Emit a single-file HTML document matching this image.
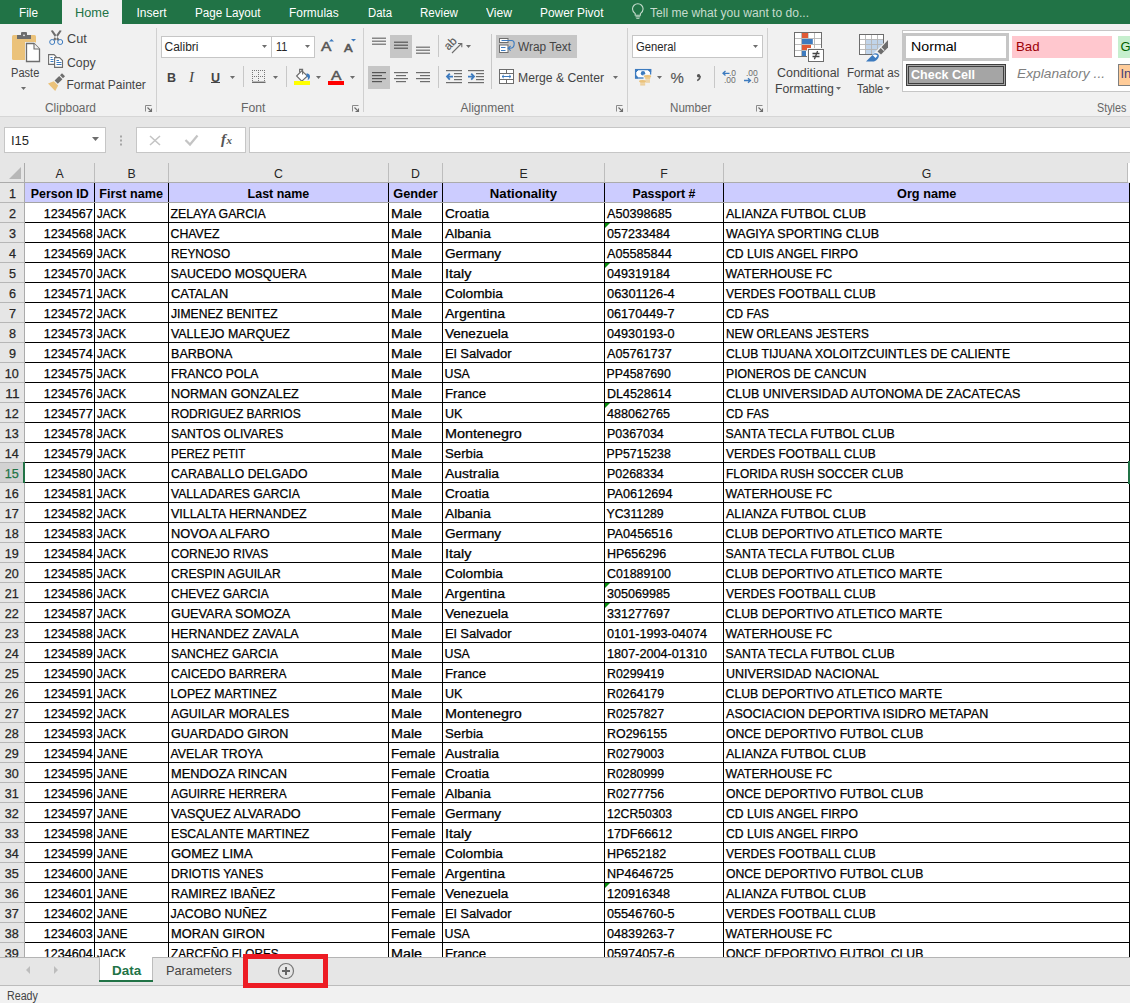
<!DOCTYPE html><html><head><meta charset="utf-8"><title>Excel</title><style>
html,body{margin:0;padding:0;}
body{width:1130px;height:1003px;position:relative;overflow:hidden;background:#fff;font-family:'Liberation Sans', sans-serif;}
.a{position:absolute;}
.t{white-space:pre;}
.g{-webkit-text-stroke:0.25px currentColor;}
.s5{-webkit-text-stroke:0.5px currentColor;}
svg.a{overflow:visible;}
</style></head><body>
<div class="a" style="left:0px;top:0px;width:1130px;height:24px;background:#217346;"></div>
<div class="a" style="left:62px;top:0px;width:60px;height:24px;background:#f1f1f1;"></div>
<div class="a t " style="top:3px;height:20px;line-height:20px;font-size:12px;color:#ffffff;left:18.50px;transform:scaleX(0.9813);transform-origin:0 0;">File</div>
<div class="a t " style="top:3px;height:20px;line-height:20px;font-size:12px;color:#217346;left:74.50px;transform:scaleX(1.0640);transform-origin:0 0;">Home</div>
<div class="a t " style="top:3px;height:20px;line-height:20px;font-size:12px;color:#ffffff;left:136.50px;">Insert</div>
<div class="a t " style="top:3px;height:20px;line-height:20px;font-size:12px;color:#ffffff;left:194.50px;transform:scaleX(0.9730);transform-origin:0 0;">Page Layout</div>
<div class="a t " style="top:3px;height:20px;line-height:20px;font-size:12px;color:#ffffff;left:288.50px;transform:scaleX(0.9915);transform-origin:0 0;">Formulas</div>
<div class="a t " style="top:3px;height:20px;line-height:20px;font-size:12px;color:#ffffff;left:367.50px;transform:scaleX(0.9442);transform-origin:0 0;">Data</div>
<div class="a t " style="top:3px;height:20px;line-height:20px;font-size:12px;color:#ffffff;left:419.50px;transform:scaleX(0.9646);transform-origin:0 0;">Review</div>
<div class="a t " style="top:3px;height:20px;line-height:20px;font-size:12px;color:#ffffff;left:485.50px;transform:scaleX(1.0082);transform-origin:0 0;">View</div>
<div class="a t " style="top:3px;height:20px;line-height:20px;font-size:12px;color:#ffffff;left:539.50px;transform:scaleX(0.9916);transform-origin:0 0;">Power Pivot</div>
<div class="a t " style="top:3px;height:20px;line-height:20px;font-size:12px;color:#c6dccd;left:649.50px;transform:scaleX(1.0058);transform-origin:0 0;">Tell me what you want to do...</div>
<div class="a" style="left:0px;top:24px;width:1130px;height:92px;background:#f1f1f1;"></div>
<div class="a" style="left:0px;top:116px;width:1130px;height:1px;background:#d6d6d6;"></div>
<div class="a" style="left:156px;top:28px;width:1px;height:84px;background:#d0d0d0;"></div>
<div class="a" style="left:363px;top:28px;width:1px;height:84px;background:#d0d0d0;"></div>
<div class="a" style="left:627px;top:28px;width:1px;height:84px;background:#d0d0d0;"></div>
<div class="a" style="left:767px;top:28px;width:1px;height:84px;background:#d0d0d0;"></div>
<div class="a t " style="top:98px;height:20px;line-height:20px;font-size:12px;color:#666666;left:44.50px;transform:scaleX(0.9926);transform-origin:0 0;">Clipboard</div>
<div class="a t " style="top:98px;height:20px;line-height:20px;font-size:12px;color:#666666;left:240.50px;transform:scaleX(1.0167);transform-origin:0 0;">Font</div>
<div class="a t " style="top:98px;height:20px;line-height:20px;font-size:12px;color:#666666;left:460.50px;">Alignment</div>
<div class="a t " style="top:98px;height:20px;line-height:20px;font-size:12px;color:#666666;left:669.50px;transform:scaleX(0.9691);transform-origin:0 0;">Number</div>
<div class="a t " style="top:98px;height:20px;line-height:20px;font-size:12px;color:#666666;left:1096.50px;transform:scaleX(0.8963);transform-origin:0 0;">Styles</div>
<div class="a t " style="top:63px;height:20px;line-height:20px;font-size:12px;color:#444444;left:10.50px;transform:scaleX(0.9229);transform-origin:0 0;">Paste</div>
<div class="a t " style="top:29px;height:20px;line-height:20px;font-size:12px;color:#444444;left:66.50px;transform:scaleX(1.0572);transform-origin:0 0;">Cut</div>
<div class="a t " style="top:53px;height:20px;line-height:20px;font-size:12px;color:#444444;left:66.50px;transform:scaleX(1.0216);transform-origin:0 0;">Copy</div>
<div class="a t " style="top:75px;height:20px;line-height:20px;font-size:12px;color:#444444;left:66.50px;">Format Painter</div>
<div class="a" style="left:161px;top:36px;width:111px;height:22px;background:#ffffff;border:1px solid #c6c6c6;box-sizing:border-box;"></div>
<div class="a" style="left:271px;top:36px;width:44px;height:22px;background:#ffffff;border:1px solid #c6c6c6;box-sizing:border-box;"></div>
<div class="a t " style="top:37px;height:20px;line-height:20px;font-size:12px;color:#262626;left:164.50px;">Calibri</div>
<div class="a t " style="top:37px;height:20px;line-height:20px;font-size:12px;color:#262626;left:275.50px;transform:scaleX(0.9068);transform-origin:0 0;">11</div>
<div class="a" style="left:390px;top:35px;width:22px;height:23px;background:#c6c6c6;"></div>
<div class="a" style="left:368px;top:66px;width:22px;height:23px;background:#c6c6c6;"></div>
<div class="a" style="left:496px;top:35px;width:81px;height:23px;background:#c6c6c6;"></div>
<div class="a t " style="top:37px;height:20px;line-height:20px;font-size:12px;color:#444444;left:517.50px;transform:scaleX(0.9890);transform-origin:0 0;">Wrap Text</div>
<div class="a t " style="top:68px;height:20px;line-height:20px;font-size:12px;color:#444444;left:517.50px;transform:scaleX(1.0155);transform-origin:0 0;">Merge &amp; Center</div>
<div class="a" style="left:632px;top:35px;width:131px;height:23px;background:#ffffff;border:1px solid #c6c6c6;box-sizing:border-box;"></div>
<div class="a t " style="top:37px;height:20px;line-height:20px;font-size:12px;color:#262626;left:635.50px;transform:scaleX(0.9352);transform-origin:0 0;">General</div>
<div class="a t " style="top:63px;height:20px;line-height:20px;font-size:12px;color:#444444;left:776.50px;transform:scaleX(1.0382);transform-origin:0 0;">Conditional</div>
<div class="a t " style="top:79px;height:20px;line-height:20px;font-size:12px;color:#444444;left:774.50px;transform:scaleX(1.0256);transform-origin:0 0;">Formatting</div>
<div class="a t " style="top:63px;height:20px;line-height:20px;font-size:12px;color:#444444;left:846.50px;transform:scaleX(0.9714);transform-origin:0 0;">Format as</div>
<div class="a t " style="top:79px;height:20px;line-height:20px;font-size:12px;color:#444444;left:856.50px;transform:scaleX(0.9138);transform-origin:0 0;">Table</div>
<div class="a" style="left:902px;top:30px;width:240px;height:62px;background:#ffffff;border:1px solid #c6c6c6;box-sizing:border-box;"></div>
<div class="a" style="left:903px;top:33px;width:106px;height:28px;background:#ffffff;border:3px solid #c6c6c6;box-sizing:border-box;"></div>
<div class="a t " style="top:37px;height:20px;line-height:20px;font-size:13px;color:#000000;left:910.50px;transform:scaleX(1.0927);transform-origin:0 0;">Normal</div>
<div class="a" style="left:1012px;top:36px;width:100px;height:22px;background:#ffc7ce;"></div>
<div class="a t " style="top:37px;height:20px;line-height:20px;font-size:13px;color:#9c0006;left:1015.50px;transform:scaleX(1.0162);transform-origin:0 0;">Bad</div>
<div class="a" style="left:1118px;top:36px;width:20px;height:22px;background:#c6efce;"></div>
<div class="a t " style="top:37px;height:20px;line-height:20px;font-size:13px;color:#006100;left:1120.50px;">Good</div>
<div class="a" style="left:906px;top:64px;width:100px;height:22px;background:#a5a5a5;border:3px double #3f3f3f;box-sizing:border-box;"></div>
<div class="a t " style="top:65px;height:20px;line-height:20px;font-size:13px;color:#ffffff;font-weight:bold;left:910.50px;transform:scaleX(0.9621);transform-origin:0 0;">Check Cell</div>
<div class="a t " style="top:64px;height:20px;line-height:20px;font-size:13px;color:#7f7f7f;font-style:italic;left:1016.50px;transform:scaleX(1.0596);transform-origin:0 0;">Explanatory ...</div>
<div class="a" style="left:1118px;top:64px;width:20px;height:22px;background:#ffcc99;border:1px solid #7f7f7f;box-sizing:border-box;"></div>
<div class="a t " style="top:64px;height:20px;line-height:20px;font-size:13px;color:#3f3f76;left:1120.50px;">Input</div>
<div class="a" style="left:0px;top:117px;width:1130px;height:46px;background:#e6e6e6;"></div>
<div class="a" style="left:4px;top:127px;width:102px;height:26px;background:#ffffff;border:1px solid #c6c6c6;box-sizing:border-box;"></div>
<div class="a t " style="top:131px;height:20px;line-height:20px;font-size:12px;color:#262626;left:10.50px;transform:scaleX(1.0837);transform-origin:0 0;">I15</div>
<div class="a" style="left:136px;top:127px;width:110px;height:26px;background:#ffffff;border:1px solid #c6c6c6;box-sizing:border-box;"></div>
<div class="a" style="left:249px;top:127px;width:900px;height:26px;background:#ffffff;border:1px solid #c6c6c6;box-sizing:border-box;"></div>
<div class="a" style="left:0px;top:163px;width:1130px;height:20px;background:#e6e6e6;"></div>
<div class="a" style="left:0px;top:183px;width:24px;height:774px;background:#e6e6e6;"></div>
<svg class="a" style="left:0px;top:163px;" width="24" height="20" viewBox="0 0 24 20"><polygon points="21,4 21,16 9,16" fill="#b7b7b7"/></svg>
<div class="a" style="left:24px;top:163px;width:1px;height:20px;background:#bdbdbd;"></div>
<div class="a" style="left:94px;top:163px;width:1px;height:20px;background:#bdbdbd;"></div>
<div class="a" style="left:168px;top:163px;width:1px;height:20px;background:#bdbdbd;"></div>
<div class="a" style="left:388px;top:163px;width:1px;height:20px;background:#bdbdbd;"></div>
<div class="a" style="left:442px;top:163px;width:1px;height:20px;background:#bdbdbd;"></div>
<div class="a" style="left:604px;top:163px;width:1px;height:20px;background:#bdbdbd;"></div>
<div class="a" style="left:723px;top:163px;width:1px;height:20px;background:#bdbdbd;"></div>
<div class="a" style="left:1127px;top:163px;width:1px;height:20px;background:#bdbdbd;"></div>
<div class="a" style="left:1128px;top:163px;width:2px;height:19px;background:#ffffff;"></div>
<div class="a" style="left:0px;top:182px;width:1128px;height:1px;background:#ababab;"></div>
<div class="a" style="left:24px;top:163px;width:1px;height:794px;background:#ababab;"></div>
<div class="a t " style="top:164px;height:20px;line-height:20px;font-size:12.3px;color:#262626;left:55.40px;">A</div>
<div class="a t " style="top:164px;height:20px;line-height:20px;font-size:12.3px;color:#262626;left:127.40px;">B</div>
<div class="a t " style="top:164px;height:20px;line-height:20px;font-size:12.3px;color:#262626;left:274.05px;">C</div>
<div class="a t " style="top:164px;height:20px;line-height:20px;font-size:12.3px;color:#262626;left:411.05px;">D</div>
<div class="a t " style="top:164px;height:20px;line-height:20px;font-size:12.3px;color:#262626;left:519.40px;">E</div>
<div class="a t " style="top:164px;height:20px;line-height:20px;font-size:12.3px;color:#262626;left:660.24px;">F</div>
<div class="a t " style="top:164px;height:20px;line-height:20px;font-size:12.3px;color:#262626;left:921.71px;">G</div>
<div class="a" style="left:25px;top:183px;width:1104px;height:19px;background:#ccccff;"></div>
<div class="a" style="left:0px;top:202px;width:24px;height:1px;background:#b6b6b6;"></div>
<div class="a" style="left:0px;top:222px;width:24px;height:1px;background:#b6b6b6;"></div>
<div class="a" style="left:0px;top:242px;width:24px;height:1px;background:#b6b6b6;"></div>
<div class="a" style="left:0px;top:262px;width:24px;height:1px;background:#b6b6b6;"></div>
<div class="a" style="left:0px;top:282px;width:24px;height:1px;background:#b6b6b6;"></div>
<div class="a" style="left:0px;top:302px;width:24px;height:1px;background:#b6b6b6;"></div>
<div class="a" style="left:0px;top:322px;width:24px;height:1px;background:#b6b6b6;"></div>
<div class="a" style="left:0px;top:342px;width:24px;height:1px;background:#b6b6b6;"></div>
<div class="a" style="left:0px;top:362px;width:24px;height:1px;background:#b6b6b6;"></div>
<div class="a" style="left:0px;top:382px;width:24px;height:1px;background:#b6b6b6;"></div>
<div class="a" style="left:0px;top:402px;width:24px;height:1px;background:#b6b6b6;"></div>
<div class="a" style="left:0px;top:422px;width:24px;height:1px;background:#b6b6b6;"></div>
<div class="a" style="left:0px;top:442px;width:24px;height:1px;background:#b6b6b6;"></div>
<div class="a" style="left:0px;top:462px;width:24px;height:1px;background:#b6b6b6;"></div>
<div class="a" style="left:0px;top:482px;width:24px;height:1px;background:#b6b6b6;"></div>
<div class="a" style="left:0px;top:502px;width:24px;height:1px;background:#b6b6b6;"></div>
<div class="a" style="left:0px;top:522px;width:24px;height:1px;background:#b6b6b6;"></div>
<div class="a" style="left:0px;top:542px;width:24px;height:1px;background:#b6b6b6;"></div>
<div class="a" style="left:0px;top:562px;width:24px;height:1px;background:#b6b6b6;"></div>
<div class="a" style="left:0px;top:582px;width:24px;height:1px;background:#b6b6b6;"></div>
<div class="a" style="left:0px;top:602px;width:24px;height:1px;background:#b6b6b6;"></div>
<div class="a" style="left:0px;top:622px;width:24px;height:1px;background:#b6b6b6;"></div>
<div class="a" style="left:0px;top:642px;width:24px;height:1px;background:#b6b6b6;"></div>
<div class="a" style="left:0px;top:662px;width:24px;height:1px;background:#b6b6b6;"></div>
<div class="a" style="left:0px;top:682px;width:24px;height:1px;background:#b6b6b6;"></div>
<div class="a" style="left:0px;top:702px;width:24px;height:1px;background:#b6b6b6;"></div>
<div class="a" style="left:0px;top:722px;width:24px;height:1px;background:#b6b6b6;"></div>
<div class="a" style="left:0px;top:742px;width:24px;height:1px;background:#b6b6b6;"></div>
<div class="a" style="left:0px;top:762px;width:24px;height:1px;background:#b6b6b6;"></div>
<div class="a" style="left:0px;top:782px;width:24px;height:1px;background:#b6b6b6;"></div>
<div class="a" style="left:0px;top:802px;width:24px;height:1px;background:#b6b6b6;"></div>
<div class="a" style="left:0px;top:822px;width:24px;height:1px;background:#b6b6b6;"></div>
<div class="a" style="left:0px;top:842px;width:24px;height:1px;background:#b6b6b6;"></div>
<div class="a" style="left:0px;top:862px;width:24px;height:1px;background:#b6b6b6;"></div>
<div class="a" style="left:0px;top:882px;width:24px;height:1px;background:#b6b6b6;"></div>
<div class="a" style="left:0px;top:902px;width:24px;height:1px;background:#b6b6b6;"></div>
<div class="a" style="left:0px;top:922px;width:24px;height:1px;background:#b6b6b6;"></div>
<div class="a" style="left:0px;top:942px;width:24px;height:1px;background:#b6b6b6;"></div>
<div class="a" style="left:0px;top:463px;width:23px;height:19px;background:#d2d2d2;"></div>
<div class="a" style="left:23px;top:462px;width:2px;height:21px;background:#217346;"></div>
<div class="a t g" style="top:184px;height:20px;line-height:20px;font-size:12.3px;color:#262626;left:8.58px;transform:scaleX(1.0267);transform-origin:50% 0;">1</div>
<div class="a t g" style="top:204px;height:20px;line-height:20px;font-size:12.3px;color:#262626;left:8.58px;transform:scaleX(1.0267);transform-origin:50% 0;">2</div>
<div class="a t g" style="top:224px;height:20px;line-height:20px;font-size:12.3px;color:#262626;left:8.58px;transform:scaleX(1.0267);transform-origin:50% 0;">3</div>
<div class="a t g" style="top:244px;height:20px;line-height:20px;font-size:12.3px;color:#262626;left:8.58px;transform:scaleX(1.0267);transform-origin:50% 0;">4</div>
<div class="a t g" style="top:264px;height:20px;line-height:20px;font-size:12.3px;color:#262626;left:8.58px;transform:scaleX(1.0267);transform-origin:50% 0;">5</div>
<div class="a t g" style="top:284px;height:20px;line-height:20px;font-size:12.3px;color:#262626;left:8.58px;transform:scaleX(1.0267);transform-origin:50% 0;">6</div>
<div class="a t g" style="top:304px;height:20px;line-height:20px;font-size:12.3px;color:#262626;left:8.58px;transform:scaleX(1.0267);transform-origin:50% 0;">7</div>
<div class="a t g" style="top:324px;height:20px;line-height:20px;font-size:12.3px;color:#262626;left:8.58px;transform:scaleX(1.0267);transform-origin:50% 0;">8</div>
<div class="a t g" style="top:344px;height:20px;line-height:20px;font-size:12.3px;color:#262626;left:8.58px;transform:scaleX(1.0267);transform-origin:50% 0;">9</div>
<div class="a t g" style="top:364px;height:20px;line-height:20px;font-size:12.3px;color:#262626;left:5.16px;transform:scaleX(1.0246);transform-origin:50% 0;">10</div>
<div class="a t g" style="top:384px;height:20px;line-height:20px;font-size:12.3px;color:#262626;left:5.62px;transform:scaleX(1.1049);transform-origin:50% 0;">11</div>
<div class="a t g" style="top:404px;height:20px;line-height:20px;font-size:12.3px;color:#262626;left:5.16px;transform:scaleX(1.0246);transform-origin:50% 0;">12</div>
<div class="a t g" style="top:424px;height:20px;line-height:20px;font-size:12.3px;color:#262626;left:5.16px;transform:scaleX(1.0246);transform-origin:50% 0;">13</div>
<div class="a t g" style="top:444px;height:20px;line-height:20px;font-size:12.3px;color:#262626;left:5.16px;transform:scaleX(1.0246);transform-origin:50% 0;">14</div>
<div class="a t g" style="top:464px;height:20px;line-height:20px;font-size:12.3px;color:#217346;left:5.16px;transform:scaleX(1.0246);transform-origin:50% 0;">15</div>
<div class="a t g" style="top:484px;height:20px;line-height:20px;font-size:12.3px;color:#262626;left:5.16px;transform:scaleX(1.0246);transform-origin:50% 0;">16</div>
<div class="a t g" style="top:504px;height:20px;line-height:20px;font-size:12.3px;color:#262626;left:5.16px;transform:scaleX(1.0246);transform-origin:50% 0;">17</div>
<div class="a t g" style="top:524px;height:20px;line-height:20px;font-size:12.3px;color:#262626;left:5.16px;transform:scaleX(1.0246);transform-origin:50% 0;">18</div>
<div class="a t g" style="top:544px;height:20px;line-height:20px;font-size:12.3px;color:#262626;left:5.16px;transform:scaleX(1.0246);transform-origin:50% 0;">19</div>
<div class="a t g" style="top:564px;height:20px;line-height:20px;font-size:12.3px;color:#262626;left:5.16px;transform:scaleX(1.0246);transform-origin:50% 0;">20</div>
<div class="a t g" style="top:584px;height:20px;line-height:20px;font-size:12.3px;color:#262626;left:5.16px;transform:scaleX(1.0246);transform-origin:50% 0;">21</div>
<div class="a t g" style="top:604px;height:20px;line-height:20px;font-size:12.3px;color:#262626;left:5.16px;transform:scaleX(1.0246);transform-origin:50% 0;">22</div>
<div class="a t g" style="top:624px;height:20px;line-height:20px;font-size:12.3px;color:#262626;left:5.16px;transform:scaleX(1.0246);transform-origin:50% 0;">23</div>
<div class="a t g" style="top:644px;height:20px;line-height:20px;font-size:12.3px;color:#262626;left:5.16px;transform:scaleX(1.0246);transform-origin:50% 0;">24</div>
<div class="a t g" style="top:664px;height:20px;line-height:20px;font-size:12.3px;color:#262626;left:5.16px;transform:scaleX(1.0246);transform-origin:50% 0;">25</div>
<div class="a t g" style="top:684px;height:20px;line-height:20px;font-size:12.3px;color:#262626;left:5.16px;transform:scaleX(1.0246);transform-origin:50% 0;">26</div>
<div class="a t g" style="top:704px;height:20px;line-height:20px;font-size:12.3px;color:#262626;left:5.16px;transform:scaleX(1.0246);transform-origin:50% 0;">27</div>
<div class="a t g" style="top:724px;height:20px;line-height:20px;font-size:12.3px;color:#262626;left:5.16px;transform:scaleX(1.0246);transform-origin:50% 0;">28</div>
<div class="a t g" style="top:744px;height:20px;line-height:20px;font-size:12.3px;color:#262626;left:5.16px;transform:scaleX(1.0246);transform-origin:50% 0;">29</div>
<div class="a t g" style="top:764px;height:20px;line-height:20px;font-size:12.3px;color:#262626;left:5.16px;transform:scaleX(1.0246);transform-origin:50% 0;">30</div>
<div class="a t g" style="top:784px;height:20px;line-height:20px;font-size:12.3px;color:#262626;left:5.16px;transform:scaleX(1.0246);transform-origin:50% 0;">31</div>
<div class="a t g" style="top:804px;height:20px;line-height:20px;font-size:12.3px;color:#262626;left:5.16px;transform:scaleX(1.0246);transform-origin:50% 0;">32</div>
<div class="a t g" style="top:824px;height:20px;line-height:20px;font-size:12.3px;color:#262626;left:5.16px;transform:scaleX(1.0246);transform-origin:50% 0;">33</div>
<div class="a t g" style="top:844px;height:20px;line-height:20px;font-size:12.3px;color:#262626;left:5.16px;transform:scaleX(1.0246);transform-origin:50% 0;">34</div>
<div class="a t g" style="top:864px;height:20px;line-height:20px;font-size:12.3px;color:#262626;left:5.16px;transform:scaleX(1.0246);transform-origin:50% 0;">35</div>
<div class="a t g" style="top:884px;height:20px;line-height:20px;font-size:12.3px;color:#262626;left:5.16px;transform:scaleX(1.0246);transform-origin:50% 0;">36</div>
<div class="a t g" style="top:904px;height:20px;line-height:20px;font-size:12.3px;color:#262626;left:5.16px;transform:scaleX(1.0246);transform-origin:50% 0;">37</div>
<div class="a t g" style="top:924px;height:20px;line-height:20px;font-size:12.3px;color:#262626;left:5.16px;transform:scaleX(1.0246);transform-origin:50% 0;">38</div>
<div class="a t g" style="top:944px;height:20px;line-height:20px;font-size:12.3px;color:#262626;left:5.16px;transform:scaleX(1.0246);transform-origin:50% 0;">39</div>
<div class="a" style="left:94px;top:183px;width:1px;height:774px;background:#000000;"></div>
<div class="a" style="left:168px;top:183px;width:1px;height:774px;background:#000000;"></div>
<div class="a" style="left:388px;top:183px;width:1px;height:774px;background:#000000;"></div>
<div class="a" style="left:442px;top:183px;width:1px;height:774px;background:#000000;"></div>
<div class="a" style="left:604px;top:183px;width:1px;height:774px;background:#000000;"></div>
<div class="a" style="left:723px;top:183px;width:1px;height:774px;background:#000000;"></div>
<div class="a" style="left:1129px;top:183px;width:1px;height:774px;background:#000000;"></div>
<div class="a" style="left:25px;top:222px;width:1104px;height:1px;background:#000000;"></div>
<div class="a" style="left:25px;top:242px;width:1104px;height:1px;background:#000000;"></div>
<div class="a" style="left:25px;top:262px;width:1104px;height:1px;background:#000000;"></div>
<div class="a" style="left:25px;top:282px;width:1104px;height:1px;background:#000000;"></div>
<div class="a" style="left:25px;top:302px;width:1104px;height:1px;background:#000000;"></div>
<div class="a" style="left:25px;top:322px;width:1104px;height:1px;background:#000000;"></div>
<div class="a" style="left:25px;top:342px;width:1104px;height:1px;background:#000000;"></div>
<div class="a" style="left:25px;top:362px;width:1104px;height:1px;background:#000000;"></div>
<div class="a" style="left:25px;top:382px;width:1104px;height:1px;background:#000000;"></div>
<div class="a" style="left:25px;top:402px;width:1104px;height:1px;background:#000000;"></div>
<div class="a" style="left:25px;top:422px;width:1104px;height:1px;background:#000000;"></div>
<div class="a" style="left:25px;top:442px;width:1104px;height:1px;background:#000000;"></div>
<div class="a" style="left:25px;top:462px;width:1104px;height:1px;background:#000000;"></div>
<div class="a" style="left:25px;top:482px;width:1104px;height:1px;background:#000000;"></div>
<div class="a" style="left:25px;top:502px;width:1104px;height:1px;background:#000000;"></div>
<div class="a" style="left:25px;top:522px;width:1104px;height:1px;background:#000000;"></div>
<div class="a" style="left:25px;top:542px;width:1104px;height:1px;background:#000000;"></div>
<div class="a" style="left:25px;top:562px;width:1104px;height:1px;background:#000000;"></div>
<div class="a" style="left:25px;top:582px;width:1104px;height:1px;background:#000000;"></div>
<div class="a" style="left:25px;top:602px;width:1104px;height:1px;background:#000000;"></div>
<div class="a" style="left:25px;top:622px;width:1104px;height:1px;background:#000000;"></div>
<div class="a" style="left:25px;top:642px;width:1104px;height:1px;background:#000000;"></div>
<div class="a" style="left:25px;top:662px;width:1104px;height:1px;background:#000000;"></div>
<div class="a" style="left:25px;top:682px;width:1104px;height:1px;background:#000000;"></div>
<div class="a" style="left:25px;top:702px;width:1104px;height:1px;background:#000000;"></div>
<div class="a" style="left:25px;top:722px;width:1104px;height:1px;background:#000000;"></div>
<div class="a" style="left:25px;top:742px;width:1104px;height:1px;background:#000000;"></div>
<div class="a" style="left:25px;top:762px;width:1104px;height:1px;background:#000000;"></div>
<div class="a" style="left:25px;top:782px;width:1104px;height:1px;background:#000000;"></div>
<div class="a" style="left:25px;top:802px;width:1104px;height:1px;background:#000000;"></div>
<div class="a" style="left:25px;top:822px;width:1104px;height:1px;background:#000000;"></div>
<div class="a" style="left:25px;top:842px;width:1104px;height:1px;background:#000000;"></div>
<div class="a" style="left:25px;top:862px;width:1104px;height:1px;background:#000000;"></div>
<div class="a" style="left:25px;top:882px;width:1104px;height:1px;background:#000000;"></div>
<div class="a" style="left:25px;top:902px;width:1104px;height:1px;background:#000000;"></div>
<div class="a" style="left:25px;top:922px;width:1104px;height:1px;background:#000000;"></div>
<div class="a" style="left:25px;top:942px;width:1104px;height:1px;background:#000000;"></div>
<div class="a" style="left:1128px;top:461px;width:2px;height:23px;background:#217346;"></div>
<div class="a" style="left:25px;top:202px;width:1104px;height:1px;background:#a3a3a3;"></div>
<div class="a t " style="top:184px;height:20px;line-height:20px;font-size:12.3px;color:#000000;font-weight:bold;left:30.80px;transform:scaleX(1.0064);transform-origin:50% 0;">Person ID</div>
<div class="a t " style="top:184px;height:20px;line-height:20px;font-size:12.3px;color:#000000;font-weight:bold;left:100.41px;transform:scaleX(1.0254);transform-origin:50% 0;">First name</div>
<div class="a t " style="top:184px;height:20px;line-height:20px;font-size:12.3px;color:#000000;font-weight:bold;left:248.09px;transform:scaleX(1.0129);transform-origin:50% 0;">Last name</div>
<div class="a t " style="top:184px;height:20px;line-height:20px;font-size:12.3px;color:#000000;font-weight:bold;left:393.97px;transform:scaleX(1.0358);transform-origin:50% 0;">Gender</div>
<div class="a t " style="top:184px;height:20px;line-height:20px;font-size:12.3px;color:#000000;font-weight:bold;left:492.06px;transform:scaleX(1.0680);transform-origin:50% 0;">Nationality</div>
<div class="a t " style="top:184px;height:20px;line-height:20px;font-size:12.3px;color:#000000;font-weight:bold;left:632.55px;">Passport #</div>
<div class="a t " style="top:184px;height:20px;line-height:20px;font-size:12.3px;color:#000000;font-weight:bold;left:897.80px;transform:scaleX(1.0340);transform-origin:50% 0;">Org name</div>
<div class="a t g" style="top:204px;height:20px;line-height:20px;font-size:12.3px;color:#000000;left:44.62px;transform:scaleX(1.0240);transform-origin:100% 0;">1234567</div>
<div class="a t g" style="top:204px;height:20px;line-height:20px;font-size:12.3px;color:#000000;left:96.50px;transform:scaleX(0.9286);transform-origin:0 0;">JACK</div>
<div class="a t g" style="top:204px;height:20px;line-height:20px;font-size:12.3px;color:#000000;left:170.50px;">ZELAYA GARCIA</div>
<div class="a t g" style="top:204px;height:20px;line-height:20px;font-size:12.3px;color:#000000;left:390.50px;transform:scaleX(1.1660);transform-origin:0 0;">Male</div>
<div class="a t g" style="top:204px;height:20px;line-height:20px;font-size:12.3px;color:#000000;left:444.50px;transform:scaleX(1.1115);transform-origin:0 0;">Croatia</div>
<div class="a t g" style="top:204px;height:20px;line-height:20px;font-size:12.3px;color:#000000;left:606.50px;transform:scaleX(1.0285);transform-origin:0 0;">A50398685</div>
<div class="a t g" style="top:204px;height:20px;line-height:20px;font-size:12.3px;color:#000000;left:725.50px;transform:scaleX(1.0121);transform-origin:0 0;">ALIANZA FUTBOL CLUB</div>
<div class="a t g" style="top:224px;height:20px;line-height:20px;font-size:12.3px;color:#000000;left:44.62px;transform:scaleX(1.0240);transform-origin:100% 0;">1234568</div>
<div class="a t g" style="top:224px;height:20px;line-height:20px;font-size:12.3px;color:#000000;left:96.50px;transform:scaleX(0.9286);transform-origin:0 0;">JACK</div>
<div class="a t g" style="top:224px;height:20px;line-height:20px;font-size:12.3px;color:#000000;left:170.50px;">CHAVEZ</div>
<div class="a t g" style="top:224px;height:20px;line-height:20px;font-size:12.3px;color:#000000;left:390.50px;transform:scaleX(1.1660);transform-origin:0 0;">Male</div>
<div class="a t g" style="top:224px;height:20px;line-height:20px;font-size:12.3px;color:#000000;left:444.50px;transform:scaleX(1.1160);transform-origin:0 0;">Albania</div>
<div class="a t g" style="top:224px;height:20px;line-height:20px;font-size:12.3px;color:#000000;left:606.50px;transform:scaleX(1.0237);transform-origin:0 0;">057233484</div>
<div class="a t g" style="top:224px;height:20px;line-height:20px;font-size:12.3px;color:#000000;left:725.50px;transform:scaleX(1.0154);transform-origin:0 0;">WAGIYA SPORTING CLUB</div>
<svg class="a" style="left:605px;top:223px;" width="6" height="6" viewBox="0 0 6 6"><polygon points="0,0 5,0 0,5" fill="#068a0c"/></svg>
<div class="a t g" style="top:244px;height:20px;line-height:20px;font-size:12.3px;color:#000000;left:44.62px;transform:scaleX(1.0240);transform-origin:100% 0;">1234569</div>
<div class="a t g" style="top:244px;height:20px;line-height:20px;font-size:12.3px;color:#000000;left:96.50px;transform:scaleX(0.9286);transform-origin:0 0;">JACK</div>
<div class="a t g" style="top:244px;height:20px;line-height:20px;font-size:12.3px;color:#000000;left:170.50px;transform:scaleX(0.9621);transform-origin:0 0;">REYNOSO</div>
<div class="a t g" style="top:244px;height:20px;line-height:20px;font-size:12.3px;color:#000000;left:390.50px;transform:scaleX(1.1660);transform-origin:0 0;">Male</div>
<div class="a t g" style="top:244px;height:20px;line-height:20px;font-size:12.3px;color:#000000;left:444.50px;transform:scaleX(1.1096);transform-origin:0 0;">Germany</div>
<div class="a t g" style="top:244px;height:20px;line-height:20px;font-size:12.3px;color:#000000;left:606.50px;transform:scaleX(1.0285);transform-origin:0 0;">A05585844</div>
<div class="a t g" style="top:244px;height:20px;line-height:20px;font-size:12.3px;color:#000000;left:725.50px;transform:scaleX(0.9883);transform-origin:0 0;">CD LUIS ANGEL FIRPO</div>
<div class="a t g" style="top:264px;height:20px;line-height:20px;font-size:12.3px;color:#000000;left:44.62px;transform:scaleX(1.0240);transform-origin:100% 0;">1234570</div>
<div class="a t g" style="top:264px;height:20px;line-height:20px;font-size:12.3px;color:#000000;left:96.50px;transform:scaleX(0.9286);transform-origin:0 0;">JACK</div>
<div class="a t g" style="top:264px;height:20px;line-height:20px;font-size:12.3px;color:#000000;left:170.50px;">SAUCEDO MOSQUERA</div>
<div class="a t g" style="top:264px;height:20px;line-height:20px;font-size:12.3px;color:#000000;left:390.50px;transform:scaleX(1.1660);transform-origin:0 0;">Male</div>
<div class="a t g" style="top:264px;height:20px;line-height:20px;font-size:12.3px;color:#000000;left:444.50px;transform:scaleX(1.1696);transform-origin:0 0;">Italy</div>
<div class="a t g" style="top:264px;height:20px;line-height:20px;font-size:12.3px;color:#000000;left:606.50px;transform:scaleX(1.0237);transform-origin:0 0;">049319184</div>
<div class="a t g" style="top:264px;height:20px;line-height:20px;font-size:12.3px;color:#000000;left:725.50px;">WATERHOUSE FC</div>
<svg class="a" style="left:605px;top:263px;" width="6" height="6" viewBox="0 0 6 6"><polygon points="0,0 5,0 0,5" fill="#068a0c"/></svg>
<div class="a t g" style="top:284px;height:20px;line-height:20px;font-size:12.3px;color:#000000;left:44.62px;transform:scaleX(1.0240);transform-origin:100% 0;">1234571</div>
<div class="a t g" style="top:284px;height:20px;line-height:20px;font-size:12.3px;color:#000000;left:96.50px;transform:scaleX(0.9286);transform-origin:0 0;">JACK</div>
<div class="a t g" style="top:284px;height:20px;line-height:20px;font-size:12.3px;color:#000000;left:170.50px;transform:scaleX(1.0452);transform-origin:0 0;">CATALAN</div>
<div class="a t g" style="top:284px;height:20px;line-height:20px;font-size:12.3px;color:#000000;left:390.50px;transform:scaleX(1.1660);transform-origin:0 0;">Male</div>
<div class="a t g" style="top:284px;height:20px;line-height:20px;font-size:12.3px;color:#000000;left:444.50px;transform:scaleX(1.1132);transform-origin:0 0;">Colombia</div>
<div class="a t g" style="top:284px;height:20px;line-height:20px;font-size:12.3px;color:#000000;left:606.50px;transform:scaleX(1.0434);transform-origin:0 0;">06301126-4</div>
<div class="a t g" style="top:284px;height:20px;line-height:20px;font-size:12.3px;color:#000000;left:725.50px;transform:scaleX(0.9724);transform-origin:0 0;">VERDES FOOTBALL CLUB</div>
<div class="a t g" style="top:304px;height:20px;line-height:20px;font-size:12.3px;color:#000000;left:44.62px;transform:scaleX(1.0240);transform-origin:100% 0;">1234572</div>
<div class="a t g" style="top:304px;height:20px;line-height:20px;font-size:12.3px;color:#000000;left:96.50px;transform:scaleX(0.9286);transform-origin:0 0;">JACK</div>
<div class="a t g" style="top:304px;height:20px;line-height:20px;font-size:12.3px;color:#000000;left:170.50px;transform:scaleX(0.9885);transform-origin:0 0;">JIMENEZ BENITEZ</div>
<div class="a t g" style="top:304px;height:20px;line-height:20px;font-size:12.3px;color:#000000;left:390.50px;transform:scaleX(1.1660);transform-origin:0 0;">Male</div>
<div class="a t g" style="top:304px;height:20px;line-height:20px;font-size:12.3px;color:#000000;left:444.50px;transform:scaleX(1.1396);transform-origin:0 0;">Argentina</div>
<div class="a t g" style="top:304px;height:20px;line-height:20px;font-size:12.3px;color:#000000;left:606.50px;transform:scaleX(1.0285);transform-origin:0 0;">06170449-7</div>
<div class="a t g" style="top:304px;height:20px;line-height:20px;font-size:12.3px;color:#000000;left:725.50px;transform:scaleX(0.9688);transform-origin:0 0;">CD FAS</div>
<div class="a t g" style="top:324px;height:20px;line-height:20px;font-size:12.3px;color:#000000;left:44.62px;transform:scaleX(1.0240);transform-origin:100% 0;">1234573</div>
<div class="a t g" style="top:324px;height:20px;line-height:20px;font-size:12.3px;color:#000000;left:96.50px;transform:scaleX(0.9286);transform-origin:0 0;">JACK</div>
<div class="a t g" style="top:324px;height:20px;line-height:20px;font-size:12.3px;color:#000000;left:170.50px;transform:scaleX(1.0080);transform-origin:0 0;">VALLEJO MARQUEZ</div>
<div class="a t g" style="top:324px;height:20px;line-height:20px;font-size:12.3px;color:#000000;left:390.50px;transform:scaleX(1.1660);transform-origin:0 0;">Male</div>
<div class="a t g" style="top:324px;height:20px;line-height:20px;font-size:12.3px;color:#000000;left:444.50px;transform:scaleX(1.1023);transform-origin:0 0;">Venezuela</div>
<div class="a t g" style="top:324px;height:20px;line-height:20px;font-size:12.3px;color:#000000;left:606.50px;transform:scaleX(1.0285);transform-origin:0 0;">04930193-0</div>
<div class="a t g" style="top:324px;height:20px;line-height:20px;font-size:12.3px;color:#000000;left:725.50px;transform:scaleX(0.9536);transform-origin:0 0;">NEW ORLEANS JESTERS</div>
<div class="a t g" style="top:344px;height:20px;line-height:20px;font-size:12.3px;color:#000000;left:44.62px;transform:scaleX(1.0240);transform-origin:100% 0;">1234574</div>
<div class="a t g" style="top:344px;height:20px;line-height:20px;font-size:12.3px;color:#000000;left:96.50px;transform:scaleX(0.9286);transform-origin:0 0;">JACK</div>
<div class="a t g" style="top:344px;height:20px;line-height:20px;font-size:12.3px;color:#000000;left:170.50px;transform:scaleX(1.0222);transform-origin:0 0;">BARBONA</div>
<div class="a t g" style="top:344px;height:20px;line-height:20px;font-size:12.3px;color:#000000;left:390.50px;transform:scaleX(1.1660);transform-origin:0 0;">Male</div>
<div class="a t g" style="top:344px;height:20px;line-height:20px;font-size:12.3px;color:#000000;left:444.50px;transform:scaleX(1.0604);transform-origin:0 0;">El Salvador</div>
<div class="a t g" style="top:344px;height:20px;line-height:20px;font-size:12.3px;color:#000000;left:606.50px;transform:scaleX(1.0285);transform-origin:0 0;">A05761737</div>
<div class="a t g" style="top:344px;height:20px;line-height:20px;font-size:12.3px;color:#000000;left:725.50px;transform:scaleX(0.9883);transform-origin:0 0;">CLUB TIJUANA XOLOITZCUINTLES DE CALIENTE</div>
<div class="a t g" style="top:364px;height:20px;line-height:20px;font-size:12.3px;color:#000000;left:44.62px;transform:scaleX(1.0240);transform-origin:100% 0;">1234575</div>
<div class="a t g" style="top:364px;height:20px;line-height:20px;font-size:12.3px;color:#000000;left:96.50px;transform:scaleX(0.9286);transform-origin:0 0;">JACK</div>
<div class="a t g" style="top:364px;height:20px;line-height:20px;font-size:12.3px;color:#000000;left:170.50px;transform:scaleX(0.9912);transform-origin:0 0;">FRANCO POLA</div>
<div class="a t g" style="top:364px;height:20px;line-height:20px;font-size:12.3px;color:#000000;left:390.50px;transform:scaleX(1.1660);transform-origin:0 0;">Male</div>
<div class="a t g" style="top:364px;height:20px;line-height:20px;font-size:12.3px;color:#000000;left:444.50px;">USA</div>
<div class="a t g" style="top:364px;height:20px;line-height:20px;font-size:12.3px;color:#000000;left:606.50px;">PP4587690</div>
<div class="a t g" style="top:364px;height:20px;line-height:20px;font-size:12.3px;color:#000000;left:725.50px;transform:scaleX(0.9929);transform-origin:0 0;">PIONEROS DE CANCUN</div>
<div class="a t g" style="top:384px;height:20px;line-height:20px;font-size:12.3px;color:#000000;left:44.62px;transform:scaleX(1.0240);transform-origin:100% 0;">1234576</div>
<div class="a t g" style="top:384px;height:20px;line-height:20px;font-size:12.3px;color:#000000;left:96.50px;transform:scaleX(0.9286);transform-origin:0 0;">JACK</div>
<div class="a t g" style="top:384px;height:20px;line-height:20px;font-size:12.3px;color:#000000;left:170.50px;transform:scaleX(1.0278);transform-origin:0 0;">NORMAN GONZALEZ</div>
<div class="a t g" style="top:384px;height:20px;line-height:20px;font-size:12.3px;color:#000000;left:390.50px;transform:scaleX(1.1660);transform-origin:0 0;">Male</div>
<div class="a t g" style="top:384px;height:20px;line-height:20px;font-size:12.3px;color:#000000;left:444.50px;transform:scaleX(1.0728);transform-origin:0 0;">France</div>
<div class="a t g" style="top:384px;height:20px;line-height:20px;font-size:12.3px;color:#000000;left:606.50px;transform:scaleX(1.0149);transform-origin:0 0;">DL4528614</div>
<div class="a t g" style="top:384px;height:20px;line-height:20px;font-size:12.3px;color:#000000;left:725.50px;transform:scaleX(1.0151);transform-origin:0 0;">CLUB UNIVERSIDAD AUTONOMA DE ZACATECAS</div>
<div class="a t g" style="top:404px;height:20px;line-height:20px;font-size:12.3px;color:#000000;left:44.62px;transform:scaleX(1.0240);transform-origin:100% 0;">1234577</div>
<div class="a t g" style="top:404px;height:20px;line-height:20px;font-size:12.3px;color:#000000;left:96.50px;transform:scaleX(0.9286);transform-origin:0 0;">JACK</div>
<div class="a t g" style="top:404px;height:20px;line-height:20px;font-size:12.3px;color:#000000;left:170.50px;transform:scaleX(0.9790);transform-origin:0 0;">RODRIGUEZ BARRIOS</div>
<div class="a t g" style="top:404px;height:20px;line-height:20px;font-size:12.3px;color:#000000;left:390.50px;transform:scaleX(1.1660);transform-origin:0 0;">Male</div>
<div class="a t g" style="top:404px;height:20px;line-height:20px;font-size:12.3px;color:#000000;left:444.50px;transform:scaleX(1.0209);transform-origin:0 0;">UK</div>
<div class="a t g" style="top:404px;height:20px;line-height:20px;font-size:12.3px;color:#000000;left:606.50px;transform:scaleX(1.0237);transform-origin:0 0;">488062765</div>
<div class="a t g" style="top:404px;height:20px;line-height:20px;font-size:12.3px;color:#000000;left:725.50px;transform:scaleX(0.9688);transform-origin:0 0;">CD FAS</div>
<svg class="a" style="left:605px;top:403px;" width="6" height="6" viewBox="0 0 6 6"><polygon points="0,0 5,0 0,5" fill="#068a0c"/></svg>
<div class="a t g" style="top:424px;height:20px;line-height:20px;font-size:12.3px;color:#000000;left:44.62px;transform:scaleX(1.0240);transform-origin:100% 0;">1234578</div>
<div class="a t g" style="top:424px;height:20px;line-height:20px;font-size:12.3px;color:#000000;left:96.50px;transform:scaleX(0.9286);transform-origin:0 0;">JACK</div>
<div class="a t g" style="top:424px;height:20px;line-height:20px;font-size:12.3px;color:#000000;left:170.50px;transform:scaleX(0.9820);transform-origin:0 0;">SANTOS OLIVARES</div>
<div class="a t g" style="top:424px;height:20px;line-height:20px;font-size:12.3px;color:#000000;left:390.50px;transform:scaleX(1.1660);transform-origin:0 0;">Male</div>
<div class="a t g" style="top:424px;height:20px;line-height:20px;font-size:12.3px;color:#000000;left:444.50px;transform:scaleX(1.1703);transform-origin:0 0;">Montenegro</div>
<div class="a t g" style="top:424px;height:20px;line-height:20px;font-size:12.3px;color:#000000;left:606.50px;transform:scaleX(1.0123);transform-origin:0 0;">P0367034</div>
<div class="a t g" style="top:424px;height:20px;line-height:20px;font-size:12.3px;color:#000000;left:725.50px;">SANTA TECLA FUTBOL CLUB</div>
<div class="a t g" style="top:444px;height:20px;line-height:20px;font-size:12.3px;color:#000000;left:44.62px;transform:scaleX(1.0240);transform-origin:100% 0;">1234579</div>
<div class="a t g" style="top:444px;height:20px;line-height:20px;font-size:12.3px;color:#000000;left:96.50px;transform:scaleX(0.9286);transform-origin:0 0;">JACK</div>
<div class="a t g" style="top:444px;height:20px;line-height:20px;font-size:12.3px;color:#000000;left:170.50px;transform:scaleX(0.9380);transform-origin:0 0;">PEREZ PETIT</div>
<div class="a t g" style="top:444px;height:20px;line-height:20px;font-size:12.3px;color:#000000;left:390.50px;transform:scaleX(1.1660);transform-origin:0 0;">Male</div>
<div class="a t g" style="top:444px;height:20px;line-height:20px;font-size:12.3px;color:#000000;left:444.50px;transform:scaleX(1.0735);transform-origin:0 0;">Serbia</div>
<div class="a t g" style="top:444px;height:20px;line-height:20px;font-size:12.3px;color:#000000;left:606.50px;">PP5715238</div>
<div class="a t g" style="top:444px;height:20px;line-height:20px;font-size:12.3px;color:#000000;left:725.50px;transform:scaleX(0.9724);transform-origin:0 0;">VERDES FOOTBALL CLUB</div>
<div class="a t g" style="top:464px;height:20px;line-height:20px;font-size:12.3px;color:#000000;left:44.62px;transform:scaleX(1.0240);transform-origin:100% 0;">1234580</div>
<div class="a t g" style="top:464px;height:20px;line-height:20px;font-size:12.3px;color:#000000;left:96.50px;transform:scaleX(0.9286);transform-origin:0 0;">JACK</div>
<div class="a t g" style="top:464px;height:20px;line-height:20px;font-size:12.3px;color:#000000;left:170.50px;transform:scaleX(0.9930);transform-origin:0 0;">CARABALLO DELGADO</div>
<div class="a t g" style="top:464px;height:20px;line-height:20px;font-size:12.3px;color:#000000;left:390.50px;transform:scaleX(1.1660);transform-origin:0 0;">Male</div>
<div class="a t g" style="top:464px;height:20px;line-height:20px;font-size:12.3px;color:#000000;left:444.50px;transform:scaleX(1.1298);transform-origin:0 0;">Australia</div>
<div class="a t g" style="top:464px;height:20px;line-height:20px;font-size:12.3px;color:#000000;left:606.50px;transform:scaleX(1.0123);transform-origin:0 0;">P0268334</div>
<div class="a t g" style="top:464px;height:20px;line-height:20px;font-size:12.3px;color:#000000;left:725.50px;transform:scaleX(0.9690);transform-origin:0 0;">FLORIDA RUSH SOCCER CLUB</div>
<div class="a t g" style="top:484px;height:20px;line-height:20px;font-size:12.3px;color:#000000;left:44.62px;transform:scaleX(1.0240);transform-origin:100% 0;">1234581</div>
<div class="a t g" style="top:484px;height:20px;line-height:20px;font-size:12.3px;color:#000000;left:96.50px;transform:scaleX(0.9286);transform-origin:0 0;">JACK</div>
<div class="a t g" style="top:484px;height:20px;line-height:20px;font-size:12.3px;color:#000000;left:170.50px;transform:scaleX(0.9889);transform-origin:0 0;">VALLADARES GARCIA</div>
<div class="a t g" style="top:484px;height:20px;line-height:20px;font-size:12.3px;color:#000000;left:390.50px;transform:scaleX(1.1660);transform-origin:0 0;">Male</div>
<div class="a t g" style="top:484px;height:20px;line-height:20px;font-size:12.3px;color:#000000;left:444.50px;transform:scaleX(1.1115);transform-origin:0 0;">Croatia</div>
<div class="a t g" style="top:484px;height:20px;line-height:20px;font-size:12.3px;color:#000000;left:606.50px;transform:scaleX(1.0331);transform-origin:0 0;">PA0612694</div>
<div class="a t g" style="top:484px;height:20px;line-height:20px;font-size:12.3px;color:#000000;left:725.50px;">WATERHOUSE FC</div>
<div class="a t g" style="top:504px;height:20px;line-height:20px;font-size:12.3px;color:#000000;left:44.62px;transform:scaleX(1.0240);transform-origin:100% 0;">1234582</div>
<div class="a t g" style="top:504px;height:20px;line-height:20px;font-size:12.3px;color:#000000;left:96.50px;transform:scaleX(0.9286);transform-origin:0 0;">JACK</div>
<div class="a t g" style="top:504px;height:20px;line-height:20px;font-size:12.3px;color:#000000;left:170.50px;transform:scaleX(1.0166);transform-origin:0 0;">VILLALTA HERNANDEZ</div>
<div class="a t g" style="top:504px;height:20px;line-height:20px;font-size:12.3px;color:#000000;left:390.50px;transform:scaleX(1.1660);transform-origin:0 0;">Male</div>
<div class="a t g" style="top:504px;height:20px;line-height:20px;font-size:12.3px;color:#000000;left:444.50px;transform:scaleX(1.1160);transform-origin:0 0;">Albania</div>
<div class="a t g" style="top:504px;height:20px;line-height:20px;font-size:12.3px;color:#000000;left:606.50px;">YC311289</div>
<div class="a t g" style="top:504px;height:20px;line-height:20px;font-size:12.3px;color:#000000;left:725.50px;transform:scaleX(1.0121);transform-origin:0 0;">ALIANZA FUTBOL CLUB</div>
<div class="a t g" style="top:524px;height:20px;line-height:20px;font-size:12.3px;color:#000000;left:44.62px;transform:scaleX(1.0240);transform-origin:100% 0;">1234583</div>
<div class="a t g" style="top:524px;height:20px;line-height:20px;font-size:12.3px;color:#000000;left:96.50px;transform:scaleX(0.9286);transform-origin:0 0;">JACK</div>
<div class="a t g" style="top:524px;height:20px;line-height:20px;font-size:12.3px;color:#000000;left:170.50px;transform:scaleX(1.0400);transform-origin:0 0;">NOVOA ALFARO</div>
<div class="a t g" style="top:524px;height:20px;line-height:20px;font-size:12.3px;color:#000000;left:390.50px;transform:scaleX(1.1660);transform-origin:0 0;">Male</div>
<div class="a t g" style="top:524px;height:20px;line-height:20px;font-size:12.3px;color:#000000;left:444.50px;transform:scaleX(1.1096);transform-origin:0 0;">Germany</div>
<div class="a t g" style="top:524px;height:20px;line-height:20px;font-size:12.3px;color:#000000;left:606.50px;transform:scaleX(1.0331);transform-origin:0 0;">PA0456516</div>
<div class="a t g" style="top:524px;height:20px;line-height:20px;font-size:12.3px;color:#000000;left:725.50px;">CLUB DEPORTIVO ATLETICO MARTE</div>
<div class="a t g" style="top:544px;height:20px;line-height:20px;font-size:12.3px;color:#000000;left:44.62px;transform:scaleX(1.0240);transform-origin:100% 0;">1234584</div>
<div class="a t g" style="top:544px;height:20px;line-height:20px;font-size:12.3px;color:#000000;left:96.50px;transform:scaleX(0.9286);transform-origin:0 0;">JACK</div>
<div class="a t g" style="top:544px;height:20px;line-height:20px;font-size:12.3px;color:#000000;left:170.50px;transform:scaleX(0.9762);transform-origin:0 0;">CORNEJO RIVAS</div>
<div class="a t g" style="top:544px;height:20px;line-height:20px;font-size:12.3px;color:#000000;left:390.50px;transform:scaleX(1.1660);transform-origin:0 0;">Male</div>
<div class="a t g" style="top:544px;height:20px;line-height:20px;font-size:12.3px;color:#000000;left:444.50px;transform:scaleX(1.1696);transform-origin:0 0;">Italy</div>
<div class="a t g" style="top:544px;height:20px;line-height:20px;font-size:12.3px;color:#000000;left:606.50px;transform:scaleX(1.0171);transform-origin:0 0;">HP656296</div>
<div class="a t g" style="top:544px;height:20px;line-height:20px;font-size:12.3px;color:#000000;left:725.50px;">SANTA TECLA FUTBOL CLUB</div>
<div class="a t g" style="top:564px;height:20px;line-height:20px;font-size:12.3px;color:#000000;left:44.62px;transform:scaleX(1.0240);transform-origin:100% 0;">1234585</div>
<div class="a t g" style="top:564px;height:20px;line-height:20px;font-size:12.3px;color:#000000;left:96.50px;transform:scaleX(0.9286);transform-origin:0 0;">JACK</div>
<div class="a t g" style="top:564px;height:20px;line-height:20px;font-size:12.3px;color:#000000;left:170.50px;transform:scaleX(0.9842);transform-origin:0 0;">CRESPIN AGUILAR</div>
<div class="a t g" style="top:564px;height:20px;line-height:20px;font-size:12.3px;color:#000000;left:390.50px;transform:scaleX(1.1660);transform-origin:0 0;">Male</div>
<div class="a t g" style="top:564px;height:20px;line-height:20px;font-size:12.3px;color:#000000;left:444.50px;transform:scaleX(1.1132);transform-origin:0 0;">Colombia</div>
<div class="a t g" style="top:564px;height:20px;line-height:20px;font-size:12.3px;color:#000000;left:606.50px;transform:scaleX(1.0064);transform-origin:0 0;">C01889100</div>
<div class="a t g" style="top:564px;height:20px;line-height:20px;font-size:12.3px;color:#000000;left:725.50px;">CLUB DEPORTIVO ATLETICO MARTE</div>
<div class="a t g" style="top:584px;height:20px;line-height:20px;font-size:12.3px;color:#000000;left:44.62px;transform:scaleX(1.0240);transform-origin:100% 0;">1234586</div>
<div class="a t g" style="top:584px;height:20px;line-height:20px;font-size:12.3px;color:#000000;left:96.50px;transform:scaleX(0.9286);transform-origin:0 0;">JACK</div>
<div class="a t g" style="top:584px;height:20px;line-height:20px;font-size:12.3px;color:#000000;left:170.50px;transform:scaleX(0.9718);transform-origin:0 0;">CHEVEZ GARCIA</div>
<div class="a t g" style="top:584px;height:20px;line-height:20px;font-size:12.3px;color:#000000;left:390.50px;transform:scaleX(1.1660);transform-origin:0 0;">Male</div>
<div class="a t g" style="top:584px;height:20px;line-height:20px;font-size:12.3px;color:#000000;left:444.50px;transform:scaleX(1.1396);transform-origin:0 0;">Argentina</div>
<div class="a t g" style="top:584px;height:20px;line-height:20px;font-size:12.3px;color:#000000;left:606.50px;transform:scaleX(1.0237);transform-origin:0 0;">305069985</div>
<div class="a t g" style="top:584px;height:20px;line-height:20px;font-size:12.3px;color:#000000;left:725.50px;transform:scaleX(0.9724);transform-origin:0 0;">VERDES FOOTBALL CLUB</div>
<svg class="a" style="left:605px;top:583px;" width="6" height="6" viewBox="0 0 6 6"><polygon points="0,0 5,0 0,5" fill="#068a0c"/></svg>
<div class="a t g" style="top:604px;height:20px;line-height:20px;font-size:12.3px;color:#000000;left:44.62px;transform:scaleX(1.0240);transform-origin:100% 0;">1234587</div>
<div class="a t g" style="top:604px;height:20px;line-height:20px;font-size:12.3px;color:#000000;left:96.50px;transform:scaleX(0.9286);transform-origin:0 0;">JACK</div>
<div class="a t g" style="top:604px;height:20px;line-height:20px;font-size:12.3px;color:#000000;left:170.50px;transform:scaleX(1.0337);transform-origin:0 0;">GUEVARA SOMOZA</div>
<div class="a t g" style="top:604px;height:20px;line-height:20px;font-size:12.3px;color:#000000;left:390.50px;transform:scaleX(1.1660);transform-origin:0 0;">Male</div>
<div class="a t g" style="top:604px;height:20px;line-height:20px;font-size:12.3px;color:#000000;left:444.50px;transform:scaleX(1.1023);transform-origin:0 0;">Venezuela</div>
<div class="a t g" style="top:604px;height:20px;line-height:20px;font-size:12.3px;color:#000000;left:606.50px;transform:scaleX(1.0237);transform-origin:0 0;">331277697</div>
<div class="a t g" style="top:604px;height:20px;line-height:20px;font-size:12.3px;color:#000000;left:725.50px;">CLUB DEPORTIVO ATLETICO MARTE</div>
<svg class="a" style="left:605px;top:603px;" width="6" height="6" viewBox="0 0 6 6"><polygon points="0,0 5,0 0,5" fill="#068a0c"/></svg>
<div class="a t g" style="top:624px;height:20px;line-height:20px;font-size:12.3px;color:#000000;left:44.62px;transform:scaleX(1.0240);transform-origin:100% 0;">1234588</div>
<div class="a t g" style="top:624px;height:20px;line-height:20px;font-size:12.3px;color:#000000;left:96.50px;transform:scaleX(0.9286);transform-origin:0 0;">JACK</div>
<div class="a t g" style="top:624px;height:20px;line-height:20px;font-size:12.3px;color:#000000;left:170.50px;transform:scaleX(1.0195);transform-origin:0 0;">HERNANDEZ ZAVALA</div>
<div class="a t g" style="top:624px;height:20px;line-height:20px;font-size:12.3px;color:#000000;left:390.50px;transform:scaleX(1.1660);transform-origin:0 0;">Male</div>
<div class="a t g" style="top:624px;height:20px;line-height:20px;font-size:12.3px;color:#000000;left:444.50px;transform:scaleX(1.0604);transform-origin:0 0;">El Salvador</div>
<div class="a t g" style="top:624px;height:20px;line-height:20px;font-size:12.3px;color:#000000;left:606.50px;transform:scaleX(1.0301);transform-origin:0 0;">0101-1993-04074</div>
<div class="a t g" style="top:624px;height:20px;line-height:20px;font-size:12.3px;color:#000000;left:725.50px;">WATERHOUSE FC</div>
<div class="a t g" style="top:644px;height:20px;line-height:20px;font-size:12.3px;color:#000000;left:44.62px;transform:scaleX(1.0240);transform-origin:100% 0;">1234589</div>
<div class="a t g" style="top:644px;height:20px;line-height:20px;font-size:12.3px;color:#000000;left:96.50px;transform:scaleX(0.9286);transform-origin:0 0;">JACK</div>
<div class="a t g" style="top:644px;height:20px;line-height:20px;font-size:12.3px;color:#000000;left:170.50px;transform:scaleX(0.9793);transform-origin:0 0;">SANCHEZ GARCIA</div>
<div class="a t g" style="top:644px;height:20px;line-height:20px;font-size:12.3px;color:#000000;left:390.50px;transform:scaleX(1.1660);transform-origin:0 0;">Male</div>
<div class="a t g" style="top:644px;height:20px;line-height:20px;font-size:12.3px;color:#000000;left:444.50px;">USA</div>
<div class="a t g" style="top:644px;height:20px;line-height:20px;font-size:12.3px;color:#000000;left:606.50px;transform:scaleX(1.0301);transform-origin:0 0;">1807-2004-01310</div>
<div class="a t g" style="top:644px;height:20px;line-height:20px;font-size:12.3px;color:#000000;left:725.50px;">SANTA TECLA FUTBOL CLUB</div>
<div class="a t g" style="top:664px;height:20px;line-height:20px;font-size:12.3px;color:#000000;left:44.62px;transform:scaleX(1.0240);transform-origin:100% 0;">1234590</div>
<div class="a t g" style="top:664px;height:20px;line-height:20px;font-size:12.3px;color:#000000;left:96.50px;transform:scaleX(0.9286);transform-origin:0 0;">JACK</div>
<div class="a t g" style="top:664px;height:20px;line-height:20px;font-size:12.3px;color:#000000;left:170.50px;transform:scaleX(0.9720);transform-origin:0 0;">CAICEDO BARRERA</div>
<div class="a t g" style="top:664px;height:20px;line-height:20px;font-size:12.3px;color:#000000;left:390.50px;transform:scaleX(1.1660);transform-origin:0 0;">Male</div>
<div class="a t g" style="top:664px;height:20px;line-height:20px;font-size:12.3px;color:#000000;left:444.50px;transform:scaleX(1.0728);transform-origin:0 0;">France</div>
<div class="a t g" style="top:664px;height:20px;line-height:20px;font-size:12.3px;color:#000000;left:606.50px;transform:scaleX(1.0068);transform-origin:0 0;">R0299419</div>
<div class="a t g" style="top:664px;height:20px;line-height:20px;font-size:12.3px;color:#000000;left:725.50px;transform:scaleX(1.0180);transform-origin:0 0;">UNIVERSIDAD NACIONAL</div>
<div class="a t g" style="top:684px;height:20px;line-height:20px;font-size:12.3px;color:#000000;left:44.62px;transform:scaleX(1.0240);transform-origin:100% 0;">1234591</div>
<div class="a t g" style="top:684px;height:20px;line-height:20px;font-size:12.3px;color:#000000;left:96.50px;transform:scaleX(0.9286);transform-origin:0 0;">JACK</div>
<div class="a t g" style="top:684px;height:20px;line-height:20px;font-size:12.3px;color:#000000;left:170.50px;">LOPEZ MARTINEZ</div>
<div class="a t g" style="top:684px;height:20px;line-height:20px;font-size:12.3px;color:#000000;left:390.50px;transform:scaleX(1.1660);transform-origin:0 0;">Male</div>
<div class="a t g" style="top:684px;height:20px;line-height:20px;font-size:12.3px;color:#000000;left:444.50px;transform:scaleX(1.0209);transform-origin:0 0;">UK</div>
<div class="a t g" style="top:684px;height:20px;line-height:20px;font-size:12.3px;color:#000000;left:606.50px;transform:scaleX(1.0068);transform-origin:0 0;">R0264179</div>
<div class="a t g" style="top:684px;height:20px;line-height:20px;font-size:12.3px;color:#000000;left:725.50px;">CLUB DEPORTIVO ATLETICO MARTE</div>
<div class="a t g" style="top:704px;height:20px;line-height:20px;font-size:12.3px;color:#000000;left:44.62px;transform:scaleX(1.0240);transform-origin:100% 0;">1234592</div>
<div class="a t g" style="top:704px;height:20px;line-height:20px;font-size:12.3px;color:#000000;left:96.50px;transform:scaleX(0.9286);transform-origin:0 0;">JACK</div>
<div class="a t g" style="top:704px;height:20px;line-height:20px;font-size:12.3px;color:#000000;left:170.50px;transform:scaleX(1.0053);transform-origin:0 0;">AGUILAR MORALES</div>
<div class="a t g" style="top:704px;height:20px;line-height:20px;font-size:12.3px;color:#000000;left:390.50px;transform:scaleX(1.1660);transform-origin:0 0;">Male</div>
<div class="a t g" style="top:704px;height:20px;line-height:20px;font-size:12.3px;color:#000000;left:444.50px;transform:scaleX(1.1703);transform-origin:0 0;">Montenegro</div>
<div class="a t g" style="top:704px;height:20px;line-height:20px;font-size:12.3px;color:#000000;left:606.50px;transform:scaleX(1.0068);transform-origin:0 0;">R0257827</div>
<div class="a t g" style="top:704px;height:20px;line-height:20px;font-size:12.3px;color:#000000;left:725.50px;transform:scaleX(1.0215);transform-origin:0 0;">ASOCIACION DEPORTIVA ISIDRO METAPAN</div>
<div class="a t g" style="top:724px;height:20px;line-height:20px;font-size:12.3px;color:#000000;left:44.62px;transform:scaleX(1.0240);transform-origin:100% 0;">1234593</div>
<div class="a t g" style="top:724px;height:20px;line-height:20px;font-size:12.3px;color:#000000;left:96.50px;transform:scaleX(0.9286);transform-origin:0 0;">JACK</div>
<div class="a t g" style="top:724px;height:20px;line-height:20px;font-size:12.3px;color:#000000;left:170.50px;transform:scaleX(1.0229);transform-origin:0 0;">GUARDADO GIRON</div>
<div class="a t g" style="top:724px;height:20px;line-height:20px;font-size:12.3px;color:#000000;left:390.50px;transform:scaleX(1.1660);transform-origin:0 0;">Male</div>
<div class="a t g" style="top:724px;height:20px;line-height:20px;font-size:12.3px;color:#000000;left:444.50px;transform:scaleX(1.0735);transform-origin:0 0;">Serbia</div>
<div class="a t g" style="top:724px;height:20px;line-height:20px;font-size:12.3px;color:#000000;left:606.50px;transform:scaleX(1.0101);transform-origin:0 0;">RO296155</div>
<div class="a t g" style="top:724px;height:20px;line-height:20px;font-size:12.3px;color:#000000;left:725.50px;transform:scaleX(0.9922);transform-origin:0 0;">ONCE DEPORTIVO FUTBOL CLUB</div>
<div class="a t g" style="top:744px;height:20px;line-height:20px;font-size:12.3px;color:#000000;left:44.62px;transform:scaleX(1.0240);transform-origin:100% 0;">1234594</div>
<div class="a t g" style="top:744px;height:20px;line-height:20px;font-size:12.3px;color:#000000;left:96.50px;transform:scaleX(0.9685);transform-origin:0 0;">JANE</div>
<div class="a t g" style="top:744px;height:20px;line-height:20px;font-size:12.3px;color:#000000;left:170.50px;">AVELAR TROYA</div>
<div class="a t g" style="top:744px;height:20px;line-height:20px;font-size:12.3px;color:#000000;left:390.50px;transform:scaleX(1.0853);transform-origin:0 0;">Female</div>
<div class="a t g" style="top:744px;height:20px;line-height:20px;font-size:12.3px;color:#000000;left:444.50px;transform:scaleX(1.1298);transform-origin:0 0;">Australia</div>
<div class="a t g" style="top:744px;height:20px;line-height:20px;font-size:12.3px;color:#000000;left:606.50px;transform:scaleX(1.0068);transform-origin:0 0;">R0279003</div>
<div class="a t g" style="top:744px;height:20px;line-height:20px;font-size:12.3px;color:#000000;left:725.50px;transform:scaleX(1.0121);transform-origin:0 0;">ALIANZA FUTBOL CLUB</div>
<div class="a t g" style="top:764px;height:20px;line-height:20px;font-size:12.3px;color:#000000;left:44.62px;transform:scaleX(1.0240);transform-origin:100% 0;">1234595</div>
<div class="a t g" style="top:764px;height:20px;line-height:20px;font-size:12.3px;color:#000000;left:96.50px;transform:scaleX(0.9685);transform-origin:0 0;">JANE</div>
<div class="a t g" style="top:764px;height:20px;line-height:20px;font-size:12.3px;color:#000000;left:170.50px;transform:scaleX(1.0425);transform-origin:0 0;">MENDOZA RINCAN</div>
<div class="a t g" style="top:764px;height:20px;line-height:20px;font-size:12.3px;color:#000000;left:390.50px;transform:scaleX(1.0853);transform-origin:0 0;">Female</div>
<div class="a t g" style="top:764px;height:20px;line-height:20px;font-size:12.3px;color:#000000;left:444.50px;transform:scaleX(1.1115);transform-origin:0 0;">Croatia</div>
<div class="a t g" style="top:764px;height:20px;line-height:20px;font-size:12.3px;color:#000000;left:606.50px;transform:scaleX(1.0068);transform-origin:0 0;">R0280999</div>
<div class="a t g" style="top:764px;height:20px;line-height:20px;font-size:12.3px;color:#000000;left:725.50px;">WATERHOUSE FC</div>
<div class="a t g" style="top:784px;height:20px;line-height:20px;font-size:12.3px;color:#000000;left:44.62px;transform:scaleX(1.0240);transform-origin:100% 0;">1234596</div>
<div class="a t g" style="top:784px;height:20px;line-height:20px;font-size:12.3px;color:#000000;left:96.50px;transform:scaleX(0.9685);transform-origin:0 0;">JANE</div>
<div class="a t g" style="top:784px;height:20px;line-height:20px;font-size:12.3px;color:#000000;left:170.50px;transform:scaleX(0.9670);transform-origin:0 0;">AGUIRRE HERRERA</div>
<div class="a t g" style="top:784px;height:20px;line-height:20px;font-size:12.3px;color:#000000;left:390.50px;transform:scaleX(1.0853);transform-origin:0 0;">Female</div>
<div class="a t g" style="top:784px;height:20px;line-height:20px;font-size:12.3px;color:#000000;left:444.50px;transform:scaleX(1.1160);transform-origin:0 0;">Albania</div>
<div class="a t g" style="top:784px;height:20px;line-height:20px;font-size:12.3px;color:#000000;left:606.50px;transform:scaleX(1.0068);transform-origin:0 0;">R0277756</div>
<div class="a t g" style="top:784px;height:20px;line-height:20px;font-size:12.3px;color:#000000;left:725.50px;transform:scaleX(0.9922);transform-origin:0 0;">ONCE DEPORTIVO FUTBOL CLUB</div>
<div class="a t g" style="top:804px;height:20px;line-height:20px;font-size:12.3px;color:#000000;left:44.62px;transform:scaleX(1.0240);transform-origin:100% 0;">1234597</div>
<div class="a t g" style="top:804px;height:20px;line-height:20px;font-size:12.3px;color:#000000;left:96.50px;transform:scaleX(0.9685);transform-origin:0 0;">JANE</div>
<div class="a t g" style="top:804px;height:20px;line-height:20px;font-size:12.3px;color:#000000;left:170.50px;transform:scaleX(1.0316);transform-origin:0 0;">VASQUEZ ALVARADO</div>
<div class="a t g" style="top:804px;height:20px;line-height:20px;font-size:12.3px;color:#000000;left:390.50px;transform:scaleX(1.0853);transform-origin:0 0;">Female</div>
<div class="a t g" style="top:804px;height:20px;line-height:20px;font-size:12.3px;color:#000000;left:444.50px;transform:scaleX(1.1096);transform-origin:0 0;">Germany</div>
<div class="a t g" style="top:804px;height:20px;line-height:20px;font-size:12.3px;color:#000000;left:606.50px;transform:scaleX(0.9923);transform-origin:0 0;">12CR50303</div>
<div class="a t g" style="top:804px;height:20px;line-height:20px;font-size:12.3px;color:#000000;left:725.50px;transform:scaleX(0.9883);transform-origin:0 0;">CD LUIS ANGEL FIRPO</div>
<div class="a t g" style="top:824px;height:20px;line-height:20px;font-size:12.3px;color:#000000;left:44.62px;transform:scaleX(1.0240);transform-origin:100% 0;">1234598</div>
<div class="a t g" style="top:824px;height:20px;line-height:20px;font-size:12.3px;color:#000000;left:96.50px;transform:scaleX(0.9685);transform-origin:0 0;">JANE</div>
<div class="a t g" style="top:824px;height:20px;line-height:20px;font-size:12.3px;color:#000000;left:170.50px;transform:scaleX(0.9940);transform-origin:0 0;">ESCALANTE MARTINEZ</div>
<div class="a t g" style="top:824px;height:20px;line-height:20px;font-size:12.3px;color:#000000;left:390.50px;transform:scaleX(1.0853);transform-origin:0 0;">Female</div>
<div class="a t g" style="top:824px;height:20px;line-height:20px;font-size:12.3px;color:#000000;left:444.50px;transform:scaleX(1.1696);transform-origin:0 0;">Italy</div>
<div class="a t g" style="top:824px;height:20px;line-height:20px;font-size:12.3px;color:#000000;left:606.50px;transform:scaleX(1.0133);transform-origin:0 0;">17DF66612</div>
<div class="a t g" style="top:824px;height:20px;line-height:20px;font-size:12.3px;color:#000000;left:725.50px;transform:scaleX(0.9883);transform-origin:0 0;">CD LUIS ANGEL FIRPO</div>
<div class="a t g" style="top:844px;height:20px;line-height:20px;font-size:12.3px;color:#000000;left:44.62px;transform:scaleX(1.0240);transform-origin:100% 0;">1234599</div>
<div class="a t g" style="top:844px;height:20px;line-height:20px;font-size:12.3px;color:#000000;left:96.50px;transform:scaleX(0.9685);transform-origin:0 0;">JANE</div>
<div class="a t g" style="top:844px;height:20px;line-height:20px;font-size:12.3px;color:#000000;left:170.50px;transform:scaleX(1.0567);transform-origin:0 0;">GOMEZ LIMA</div>
<div class="a t g" style="top:844px;height:20px;line-height:20px;font-size:12.3px;color:#000000;left:390.50px;transform:scaleX(1.0853);transform-origin:0 0;">Female</div>
<div class="a t g" style="top:844px;height:20px;line-height:20px;font-size:12.3px;color:#000000;left:444.50px;transform:scaleX(1.1132);transform-origin:0 0;">Colombia</div>
<div class="a t g" style="top:844px;height:20px;line-height:20px;font-size:12.3px;color:#000000;left:606.50px;transform:scaleX(1.0171);transform-origin:0 0;">HP652182</div>
<div class="a t g" style="top:844px;height:20px;line-height:20px;font-size:12.3px;color:#000000;left:725.50px;transform:scaleX(0.9724);transform-origin:0 0;">VERDES FOOTBALL CLUB</div>
<div class="a t g" style="top:864px;height:20px;line-height:20px;font-size:12.3px;color:#000000;left:44.62px;transform:scaleX(1.0240);transform-origin:100% 0;">1234600</div>
<div class="a t g" style="top:864px;height:20px;line-height:20px;font-size:12.3px;color:#000000;left:96.50px;transform:scaleX(0.9685);transform-origin:0 0;">JANE</div>
<div class="a t g" style="top:864px;height:20px;line-height:20px;font-size:12.3px;color:#000000;left:170.50px;transform:scaleX(0.9836);transform-origin:0 0;">DRIOTIS YANES</div>
<div class="a t g" style="top:864px;height:20px;line-height:20px;font-size:12.3px;color:#000000;left:390.50px;transform:scaleX(1.0853);transform-origin:0 0;">Female</div>
<div class="a t g" style="top:864px;height:20px;line-height:20px;font-size:12.3px;color:#000000;left:444.50px;transform:scaleX(1.1396);transform-origin:0 0;">Argentina</div>
<div class="a t g" style="top:864px;height:20px;line-height:20px;font-size:12.3px;color:#000000;left:606.50px;transform:scaleX(1.0231);transform-origin:0 0;">NP4646725</div>
<div class="a t g" style="top:864px;height:20px;line-height:20px;font-size:12.3px;color:#000000;left:725.50px;transform:scaleX(0.9922);transform-origin:0 0;">ONCE DEPORTIVO FUTBOL CLUB</div>
<div class="a t g" style="top:884px;height:20px;line-height:20px;font-size:12.3px;color:#000000;left:44.62px;transform:scaleX(1.0240);transform-origin:100% 0;">1234601</div>
<div class="a t g" style="top:884px;height:20px;line-height:20px;font-size:12.3px;color:#000000;left:96.50px;transform:scaleX(0.9685);transform-origin:0 0;">JANE</div>
<div class="a t g" style="top:884px;height:20px;line-height:20px;font-size:12.3px;color:#000000;left:170.50px;transform:scaleX(1.0078);transform-origin:0 0;">RAMIREZ IBAÑEZ</div>
<div class="a t g" style="top:884px;height:20px;line-height:20px;font-size:12.3px;color:#000000;left:390.50px;transform:scaleX(1.0853);transform-origin:0 0;">Female</div>
<div class="a t g" style="top:884px;height:20px;line-height:20px;font-size:12.3px;color:#000000;left:444.50px;transform:scaleX(1.1023);transform-origin:0 0;">Venezuela</div>
<div class="a t g" style="top:884px;height:20px;line-height:20px;font-size:12.3px;color:#000000;left:606.50px;transform:scaleX(1.0237);transform-origin:0 0;">120916348</div>
<div class="a t g" style="top:884px;height:20px;line-height:20px;font-size:12.3px;color:#000000;left:725.50px;transform:scaleX(1.0121);transform-origin:0 0;">ALIANZA FUTBOL CLUB</div>
<svg class="a" style="left:605px;top:883px;" width="6" height="6" viewBox="0 0 6 6"><polygon points="0,0 5,0 0,5" fill="#068a0c"/></svg>
<div class="a t g" style="top:904px;height:20px;line-height:20px;font-size:12.3px;color:#000000;left:44.62px;transform:scaleX(1.0240);transform-origin:100% 0;">1234602</div>
<div class="a t g" style="top:904px;height:20px;line-height:20px;font-size:12.3px;color:#000000;left:96.50px;transform:scaleX(0.9685);transform-origin:0 0;">JANE</div>
<div class="a t g" style="top:904px;height:20px;line-height:20px;font-size:12.3px;color:#000000;left:170.50px;">JACOBO NUÑEZ</div>
<div class="a t g" style="top:904px;height:20px;line-height:20px;font-size:12.3px;color:#000000;left:390.50px;transform:scaleX(1.0853);transform-origin:0 0;">Female</div>
<div class="a t g" style="top:904px;height:20px;line-height:20px;font-size:12.3px;color:#000000;left:444.50px;transform:scaleX(1.0604);transform-origin:0 0;">El Salvador</div>
<div class="a t g" style="top:904px;height:20px;line-height:20px;font-size:12.3px;color:#000000;left:606.50px;transform:scaleX(1.0285);transform-origin:0 0;">05546760-5</div>
<div class="a t g" style="top:904px;height:20px;line-height:20px;font-size:12.3px;color:#000000;left:725.50px;transform:scaleX(0.9724);transform-origin:0 0;">VERDES FOOTBALL CLUB</div>
<div class="a t g" style="top:924px;height:20px;line-height:20px;font-size:12.3px;color:#000000;left:44.62px;transform:scaleX(1.0240);transform-origin:100% 0;">1234603</div>
<div class="a t g" style="top:924px;height:20px;line-height:20px;font-size:12.3px;color:#000000;left:96.50px;transform:scaleX(0.9685);transform-origin:0 0;">JANE</div>
<div class="a t g" style="top:924px;height:20px;line-height:20px;font-size:12.3px;color:#000000;left:170.50px;transform:scaleX(1.0472);transform-origin:0 0;">MORAN GIRON</div>
<div class="a t g" style="top:924px;height:20px;line-height:20px;font-size:12.3px;color:#000000;left:390.50px;transform:scaleX(1.0853);transform-origin:0 0;">Female</div>
<div class="a t g" style="top:924px;height:20px;line-height:20px;font-size:12.3px;color:#000000;left:444.50px;">USA</div>
<div class="a t g" style="top:924px;height:20px;line-height:20px;font-size:12.3px;color:#000000;left:606.50px;transform:scaleX(1.0285);transform-origin:0 0;">04839263-7</div>
<div class="a t g" style="top:924px;height:20px;line-height:20px;font-size:12.3px;color:#000000;left:725.50px;">WATERHOUSE FC</div>
<div class="a t g" style="top:944px;height:20px;line-height:20px;font-size:12.3px;color:#000000;left:44.62px;transform:scaleX(1.0240);transform-origin:100% 0;">1234604</div>
<div class="a t g" style="top:944px;height:20px;line-height:20px;font-size:12.3px;color:#000000;left:96.50px;transform:scaleX(0.9286);transform-origin:0 0;">JACK</div>
<div class="a t g" style="top:944px;height:20px;line-height:20px;font-size:12.3px;color:#000000;left:170.50px;transform:scaleX(0.9543);transform-origin:0 0;">ZARCEÑO FLORES</div>
<div class="a t g" style="top:944px;height:20px;line-height:20px;font-size:12.3px;color:#000000;left:390.50px;transform:scaleX(1.1660);transform-origin:0 0;">Male</div>
<div class="a t g" style="top:944px;height:20px;line-height:20px;font-size:12.3px;color:#000000;left:444.50px;transform:scaleX(1.0728);transform-origin:0 0;">France</div>
<div class="a t g" style="top:944px;height:20px;line-height:20px;font-size:12.3px;color:#000000;left:606.50px;transform:scaleX(1.0285);transform-origin:0 0;">05974057-6</div>
<div class="a t g" style="top:944px;height:20px;line-height:20px;font-size:12.3px;color:#000000;left:725.50px;transform:scaleX(0.9922);transform-origin:0 0;">ONCE DEPORTIVO FUTBOL CLUB</div>
<div class="a" style="left:0px;top:957px;width:1130px;height:29px;background:#e6e6e6;"></div>
<div class="a" style="left:0px;top:957px;width:1130px;height:1px;background:#b4b4b4;"></div>
<div class="a" style="left:0px;top:985px;width:1130px;height:1px;background:#bcbcbc;"></div>
<div class="a" style="left:99px;top:957px;width:54px;height:25px;background:#ffffff;border-left:1px solid #bdbdbd;border-right:1px solid #bdbdbd;box-sizing:border-box;"></div>
<div class="a" style="left:99px;top:980px;width:54px;height:2px;background:#217346;"></div>
<div class="a t " style="top:961px;height:20px;line-height:20px;font-size:12px;color:#217346;font-weight:bold;left:111.50px;transform:scaleX(1.1193);transform-origin:0 0;">Data</div>
<div class="a t " style="top:961px;height:20px;line-height:20px;font-size:12px;color:#444444;left:165.50px;transform:scaleX(1.0618);transform-origin:0 0;">Parameters</div>
<svg class="a" style="left:24px;top:965px;" width="8" height="10" viewBox="0 0 8 10"><polygon points="6,1 6,9 2,5" fill="#bdbdbd"/></svg>
<svg class="a" style="left:52px;top:965px;" width="8" height="10" viewBox="0 0 8 10"><polygon points="2,1 2,9 6,5" fill="#bdbdbd"/></svg>
<svg class="a" style="left:276px;top:961px;" width="20" height="20" viewBox="0 0 20 20"><circle cx="10" cy="10" r="7.5" fill="none" stroke="#777" stroke-width="1.2"/><rect x="6" y="9" width="8" height="2" fill="#666"/><rect x="9" y="6" width="2" height="8" fill="#666"/></svg>
<div class="a" style="left:0px;top:986px;width:1130px;height:17px;background:#f1f1f1;"></div>
<div class="a t " style="top:986px;height:20px;line-height:20px;font-size:12px;color:#444444;left:6.50px;transform:scaleX(0.8905);transform-origin:0 0;">Ready</div>
<svg class="a" style="left:0;top:0" width="1130" height="120" viewBox="0 0 1130 120"><rect x="12" y="35" width="24" height="25" rx="1.5" fill="#ebc27a"/><rect x="17" y="35" width="14" height="4" fill="#6d6d6d"/><rect x="21" y="32" width="6" height="4" rx="1" fill="#6d6d6d"/><circle cx="24" cy="35.3" r="0.9" fill="#f1f1f1"/><path d="M25,42 H35 L41,48 V63 H25 Z" fill="#f1f1f1"/><path d="M26.5,43.5 H34 L39.5,49 V61.5 H26.5 Z" fill="#ffffff" stroke="#6d6d6d" stroke-width="1.3"/><path d="M34,43.5 V49 H39.5" fill="#f1f1f1" stroke="#6d6d6d" stroke-width="1.1"/><polygon points="21,87 26,87 23.5,90" fill="#6d6d6d"/><path d="M50.8,30.8 L52.8,30.2 L59.4,39.4 L57.4,40.8 Z M61.7,30.8 L59.7,30.2 L53.1,39.4 L55.1,40.8 Z" fill="#6d6d6d"/><circle cx="52.2" cy="42" r="2.5" fill="none" stroke="#3d7bbf" stroke-width="1.0"/><circle cx="60.2" cy="42" r="2.5" fill="none" stroke="#3d7bbf" stroke-width="1.0"/><path d="M48.6,54.6 H54 L56,56.6 V64.4 H48.6 Z" fill="#fff" stroke="#6d6d6d" stroke-width="1.1"/><rect x="50.5" y="57" width="2" height="1" fill="#3d7bbf"/><rect x="50.5" y="59" width="3" height="1" fill="#3d7bbf"/><rect x="50.5" y="61" width="3" height="1" fill="#3d7bbf"/><path d="M54.6,57.6 H59.5 L62.5,60.6 V67.4 H54.6 Z" fill="#fff" stroke="#6d6d6d" stroke-width="1.1"/><rect x="56.5" y="60" width="2.5" height="1" fill="#3d7bbf"/><rect x="56.5" y="62" width="5" height="1" fill="#3d7bbf"/><rect x="56.5" y="64" width="5" height="1" fill="#3d7bbf"/><path d="M48,83.4 L53.8,81.2 L58.2,85.6 L55.2,91 Z" fill="#ebc27a"/><path d="M54.6,80.6 L59.2,76 L62.4,79.2 L57.8,83.8 Z" fill="#6d6d6d"/><path d="M60,75.2 L62,73.2 L65,76.2 L63,78.2 Z" fill="#6d6d6d"/><path d="M145.5,111.5 V105.5 H151.5" stroke="#8a8a8a" stroke-width="1" fill="none"/><path d="M147.5,107.5 L151.5,111.5 M151.5,108.5 V111.5 H148.5" stroke="#6d6d6d" stroke-width="1.1" fill="none"/><rect x="271" y="36" width="1" height="21" fill="#c6c6c6"/><polygon points="262,45 267,45 264.5,48" fill="#6d6d6d"/><polygon points="305,45 310,45 307.5,48" fill="#6d6d6d"/><polygon points="329,41.6 331.5,39 334,41.6" fill="#3d7bbf"/><polygon points="351,39 356,39 353.5,41.6" fill="#3d7bbf"/><polygon points="230,76 235,76 232.5,79" fill="#6d6d6d"/><polygon points="273,76 278,76 275.5,79" fill="#6d6d6d"/><polygon points="316,76 321,76 318.5,79" fill="#6d6d6d"/><polygon points="350,76 355,76 352.5,79" fill="#6d6d6d"/><rect x="243" y="66" width="1" height="21" fill="#c8c8c8"/><rect x="286" y="66" width="1" height="21" fill="#c8c8c8"/><line x1="252" y1="70.5" x2="265" y2="70.5" stroke="#777" stroke-width="1" stroke-dasharray="1 1"/><line x1="252" y1="76.5" x2="265" y2="76.5" stroke="#777" stroke-width="1" stroke-dasharray="1 1"/><line x1="252.5" y1="70" x2="252.5" y2="82" stroke="#777" stroke-width="1" stroke-dasharray="1 1"/><line x1="258.5" y1="70" x2="258.5" y2="82" stroke="#777" stroke-width="1" stroke-dasharray="1 1"/><line x1="264.5" y1="70" x2="264.5" y2="82" stroke="#777" stroke-width="1" stroke-dasharray="1 1"/><rect x="252" y="81.6" width="13.5" height="1.4" fill="#6d6d6d"/><path d="M296.6,76 L301.8,70.8 L307.4,76 L301.8,81.2 Z" fill="#fff" stroke="#6d6d6d" stroke-width="1.1"/><path d="M299.6,72.6 V69.4 H302.6 V74.6" stroke="#6d6d6d" stroke-width="1.1" fill="none"/><path d="M306.6,73.2 Q310.4,73.6 310,77.2 Q309.6,79.2 307.6,80.2 Q308.6,77 306.6,76.6 Z" fill="#3d7bbf"/><rect x="294" y="81" width="16" height="4" fill="#ffff00"/><rect x="328" y="81" width="16" height="4" fill="#ff0000"/><path d="M352.5,111.5 V105.5 H358.5" stroke="#8a8a8a" stroke-width="1" fill="none"/><path d="M354.5,107.5 L358.5,111.5 M358.5,108.5 V111.5 H355.5" stroke="#6d6d6d" stroke-width="1.1" fill="none"/><rect x="372" y="37.6" width="14" height="1.2" fill="#6d6d6d"/><rect x="372" y="40.6" width="14" height="1.2" fill="#6d6d6d"/><rect x="372" y="43.6" width="14" height="1.2" fill="#6d6d6d"/><rect x="394" y="41.6" width="14" height="1.2" fill="#555"/><rect x="394" y="44.6" width="14" height="1.2" fill="#555"/><rect x="394" y="47.6" width="14" height="1.2" fill="#555"/><rect x="416" y="46.6" width="14" height="1.2" fill="#6d6d6d"/><rect x="416" y="49.6" width="14" height="1.2" fill="#6d6d6d"/><rect x="416" y="52.6" width="14" height="1.2" fill="#6d6d6d"/><rect x="438" y="35" width="1" height="22" fill="#c8c8c8"/><rect x="438" y="66" width="1" height="22" fill="#c8c8c8"/><rect x="372" y="72" width="14" height="1.2" fill="#555"/><rect x="372" y="75" width="10" height="1.2" fill="#555"/><rect x="372" y="78" width="14" height="1.2" fill="#555"/><rect x="372" y="81" width="10" height="1.2" fill="#555"/><rect x="394" y="72" width="14" height="1.2" fill="#6d6d6d"/><rect x="396" y="75" width="10" height="1.2" fill="#6d6d6d"/><rect x="394" y="78" width="14" height="1.2" fill="#6d6d6d"/><rect x="396" y="81" width="10" height="1.2" fill="#6d6d6d"/><rect x="416" y="72" width="14" height="1.2" fill="#6d6d6d"/><rect x="420" y="75" width="10" height="1.2" fill="#6d6d6d"/><rect x="416" y="78" width="14" height="1.2" fill="#6d6d6d"/><rect x="420" y="81" width="10" height="1.2" fill="#6d6d6d"/><text x="0" y="0" transform="translate(448.6,50.8) rotate(-45)" font-family="Liberation Sans" font-size="11.5" fill="#555" stroke="#555" stroke-width="0.15">ab</text><path d="M452,53 L461.5,43.5 M458,43.5 H461.8 V47.3" stroke="#6d6d6d" stroke-width="1.1" fill="none"/><polygon points="466,45 471,45 468.5,48" fill="#6d6d6d"/><rect x="446" y="70" width="16" height="1.2" fill="#6d6d6d"/><rect x="454" y="73" width="8" height="1.2" fill="#6d6d6d"/><rect x="454" y="76" width="8" height="1.2" fill="#6d6d6d"/><rect x="454" y="79" width="8" height="1.2" fill="#6d6d6d"/><rect x="446" y="82" width="16" height="1.2" fill="#6d6d6d"/><path d="M453,76.6 H448 M449.8,73.6 L447,76.6 L449.8,79.6" stroke="#3d7bbf" stroke-width="1.8" fill="none"/><rect x="468" y="70" width="16" height="1.2" fill="#6d6d6d"/><rect x="476" y="73" width="8" height="1.2" fill="#6d6d6d"/><rect x="476" y="76" width="8" height="1.2" fill="#6d6d6d"/><rect x="476" y="79" width="8" height="1.2" fill="#6d6d6d"/><rect x="468" y="82" width="16" height="1.2" fill="#6d6d6d"/><path d="M468,76.6 H473 M471.2,73.6 L474,76.6 L471.2,79.6" stroke="#3d7bbf" stroke-width="1.8" fill="none"/><rect x="491" y="34" width="1" height="55" fill="#c8c8c8"/><rect x="499.5" y="38.5" width="8.5" height="4" fill="#fff" stroke="#6d6d6d" stroke-width="1"/><rect x="499.5" y="45" width="8.5" height="7.5" fill="#fff" stroke="#6d6d6d" stroke-width="1"/><rect x="501" y="47" width="4.5" height="1" fill="#3d7bbf"/><rect x="501" y="50" width="4.5" height="1" fill="#3d7bbf"/><path d="M501.5,40.5 H511.5 Q514.2,40.5 514.2,43.5 Q514.2,48.3 510,48.3 H508.5 M510.6,46 L508.2,48.3 L510.6,50.6" stroke="#3d7bbf" stroke-width="1.1" fill="none"/><rect x="499.5" y="69.5" width="14" height="14" fill="#fff" stroke="#6d6d6d" stroke-width="1"/><path d="M499.5,73.5 H513.5 M499.5,79.5 H513.5 M506.5,69.5 V73.5 M506.5,79.5 V83.5" stroke="#6d6d6d" stroke-width="1" fill="none"/><path d="M502,76.5 H511 M503.8,75 L502,76.5 L503.8,78 M509.2,75 L511,76.5 L509.2,78" stroke="#3d7bbf" stroke-width="1" fill="none"/><polygon points="613,76 618,76 615.5,79" fill="#6d6d6d"/><path d="M616.5,111.5 V105.5 H622.5" stroke="#8a8a8a" stroke-width="1" fill="none"/><path d="M618.5,107.5 L622.5,111.5 M622.5,108.5 V111.5 H619.5" stroke="#6d6d6d" stroke-width="1.1" fill="none"/><polygon points="753,45 758,45 755.5,48" fill="#6d6d6d"/><rect x="635.6" y="69.6" width="15" height="8.4" fill="#fff" stroke="#3d7bbf" stroke-width="1.3"/><path d="M635,69 h3 v2 h-1 v1 h-2 Z M651.2,69 h-3 v2 h1 v1 h2 Z M635,78.4 h3 v-2 h-1 v-1 h-2 Z" fill="#3d7bbf"/><circle cx="643" cy="73.3" r="2.2" fill="#3d7bbf"/><rect x="643.5" y="74.5" width="8.5" height="10" fill="#f1f1f1"/><rect x="638" y="79" width="8.5" height="7" fill="#f1f1f1"/><ellipse cx="647.6" cy="76.4" rx="3.6" ry="1.3" fill="#ebc27a"/><rect x="645.2" y="77.6" width="5" height="1.2" fill="#ebc27a"/><rect x="645.5" y="79.5" width="4.5" height="1.1" fill="#ebc27a"/><rect x="645.5" y="81.4" width="4.5" height="1.1" fill="#ebc27a"/><ellipse cx="642.5" cy="81.2" rx="3.5" ry="1.3" fill="#ebc27a"/><rect x="640.2" y="82.4" width="5" height="1.2" fill="#ebc27a"/><rect x="640.2" y="84.3" width="5" height="1.1" fill="#ebc27a"/><polygon points="657,76 662,76 659.5,79" fill="#6d6d6d"/><text x="670.5" y="83" font-family="Liberation Sans" font-size="15" fill="#555" stroke="#555" stroke-width="0.15">%</text><circle cx="698.6" cy="75.8" r="1.7" fill="#555"/><path d="M700.2,76 Q700.4,79 697.2,80.6" stroke="#555" stroke-width="1.3" fill="none"/><rect x="714" y="66" width="1" height="22" fill="#c8c8c8"/><text x="729" y="76" font-family="Liberation Sans" font-size="8.5" fill="#6d6d6d">.0</text><text x="724" y="83.3" font-family="Liberation Sans" font-size="8.5" fill="#6d6d6d">.00</text><path d="M729.5,73.3 H723 M725.5,71 L723,73.3 L725.5,75.6" stroke="#3d7bbf" stroke-width="1.3" fill="none"/><text x="746" y="76" font-family="Liberation Sans" font-size="8.5" fill="#6d6d6d">.00</text><text x="751.5" y="83.3" font-family="Liberation Sans" font-size="8.5" fill="#6d6d6d">.0</text><path d="M744,80.5 H750.5 M748,78.2 L750.5,80.5 L748,82.8" stroke="#3d7bbf" stroke-width="1.3" fill="none"/><path d="M756.5,111.5 V105.5 H762.5" stroke="#8a8a8a" stroke-width="1" fill="none"/><path d="M758.5,107.5 L762.5,111.5 M762.5,108.5 V111.5 H759.5" stroke="#6d6d6d" stroke-width="1.1" fill="none"/><rect x="794.5" y="32.5" width="27" height="24" fill="#fff"/><path d="M801.5,32.5 V56.5 M808.2,32.5 V56.5 M814.5,32.5 V56.5 M794.5,38.5 H821.5 M794.5,44.5 H821.5 M794.5,50.5 H821.5" stroke="#b4b4b4" stroke-width="0.9" fill="none"/><rect x="802" y="33" width="6" height="5" fill="#e05a35"/><rect x="802" y="39" width="10.8" height="5" fill="#3d7bbf"/><rect x="802" y="45" width="9" height="5" fill="#e05a35"/><rect x="802" y="51" width="4" height="5.5" fill="#3d7bbf"/><rect x="794.5" y="32.5" width="27" height="24" fill="none" stroke="#6d6d6d" stroke-width="1"/><rect x="807" y="48" width="18" height="15" fill="#f1f1f1"/><rect x="808.5" y="49.5" width="15" height="12" fill="#fff" stroke="#6d6d6d" stroke-width="1"/><path d="M812.5,53.5 H819.5 M812.5,56.5 H819.5 M817.6,51 L814.4,59.2" stroke="#444" stroke-width="1.3" fill="none"/><polygon points="836,87 841,87 838.5,90" fill="#6d6d6d"/><rect x="859.5" y="34.5" width="24" height="20" fill="#fff"/><rect x="865.5" y="39.5" width="18" height="15" fill="#c0d4ea"/><path d="M865.5,34.5 V54.5 M871.5,34.5 V54.5 M877.5,34.5 V54.5 M859.5,39.5 H883.5 M859.5,44.5 H883.5 M859.5,49.5 H883.5" stroke="#b4b4b4" stroke-width="0.9" fill="none"/><rect x="859.5" y="34.5" width="24" height="20" fill="none" stroke="#6d6d6d" stroke-width="1"/><path d="M864,63 L880,47 L890,37 L892,49 L878,58 Z" fill="#f1f1f1"/><rect x="882" y="53" width="3" height="3" fill="#f1f1f1"/><path d="M877.5,51.5 L888,40 V47.5 L881,54.5 Z" fill="#6d6d6d"/><path d="M880.3,46.8 L884.2,50.7" stroke="#f1f1f1" stroke-width="1.1"/><path d="M866,61.6 L874,53.5 Q878,52.5 879,55.5 Q878.5,59.5 874,61.6 Z" fill="#3d7bbf"/><path d="M872.5,55 Q875.5,53.6 877.5,55.8 L875.5,58 Z" fill="#fff"/><polygon points="885,87 890,87 887.5,90" fill="#6d6d6d"/></svg>
<div class="a t " style="top:68px;height:20px;line-height:20px;font-size:12.5px;color:#444;font-weight:bold;left:167.00px;">B</div>
<div class="a t" style="left:189px;top:69px;line-height:20px;height:20px;font:italic 15px 'Liberation Serif', serif;color:#444">I</div>
<div class="a t " style="top:68px;height:20px;line-height:20px;font-size:12.5px;color:#444;font-weight:bold;left:211.00px;">U</div>
<div class="a" style="left:211px;top:82px;width:9px;height:1px;background:#444;"></div>
<div class="a t s5" style="top:37px;height:20px;line-height:20px;font-size:13px;color:#555;left:320.50px;transform:scaleX(1.1992);transform-origin:0 0;">A</div>
<div class="a t s5" style="top:39px;height:20px;line-height:20px;font-size:10px;color:#555;left:343.50px;transform:scaleX(1.2871);transform-origin:0 0;">A</div>
<div class="a t s5" style="top:66px;height:20px;line-height:20px;font-size:13.5px;color:#555;left:331.00px;transform:scaleX(1.1602);transform-origin:0 0;">A</div>
<svg class="a" style="left:0;top:0" width="1130" height="160" viewBox="0 0 1130 160"><polygon points="92,137 99,137 95.5,141" fill="#6d6d6d"/><rect x="120" y="135.5" width="2" height="2" fill="#a6a6a6"/><rect x="120" y="139.5" width="2" height="2" fill="#a6a6a6"/><rect x="120" y="143.5" width="2" height="2" fill="#a6a6a6"/><path d="M150,136 L160,145 M160,136 L150,145" stroke="#c4c4c4" stroke-width="1.6" fill="none"/><path d="M185.5,140 L190,144.5 L197.5,135.5" stroke="#c4c4c4" stroke-width="2.2" fill="none"/><path d="M632,0 h0" /></svg>
<svg class="a" style="left:215px;top:128px" width="25" height="22" viewBox="0 0 25 22"><text x="6" y="16" font-family="Liberation Serif" font-style="italic" font-weight="bold" font-size="15" fill="#555">f</text><text x="11.5" y="16" font-family="Liberation Serif" font-style="italic" font-weight="bold" font-size="11" fill="#555">x</text></svg>
<svg class="a" style="left:0;top:0" width="1130" height="24" viewBox="0 0 1130 24"><path d="M635.2,13.6 Q632.5,11.5 632.5,9 A5.3,5.3 0 0 1 643.1,9 Q643.1,11.5 640.4,13.6 V15.2 H635.2 Z" fill="none" stroke="#c6dccd" stroke-width="1.1"/><path d="M635.5,16.8 H640.2 M636.3,18.3 H639.4" stroke="#c6dccd" stroke-width="1"/></svg>
<div class="a" style="left:243px;top:954px;width:85px;height:34px;border:5px solid #ed1c24;box-sizing:border-box;"></div>
</body></html>
